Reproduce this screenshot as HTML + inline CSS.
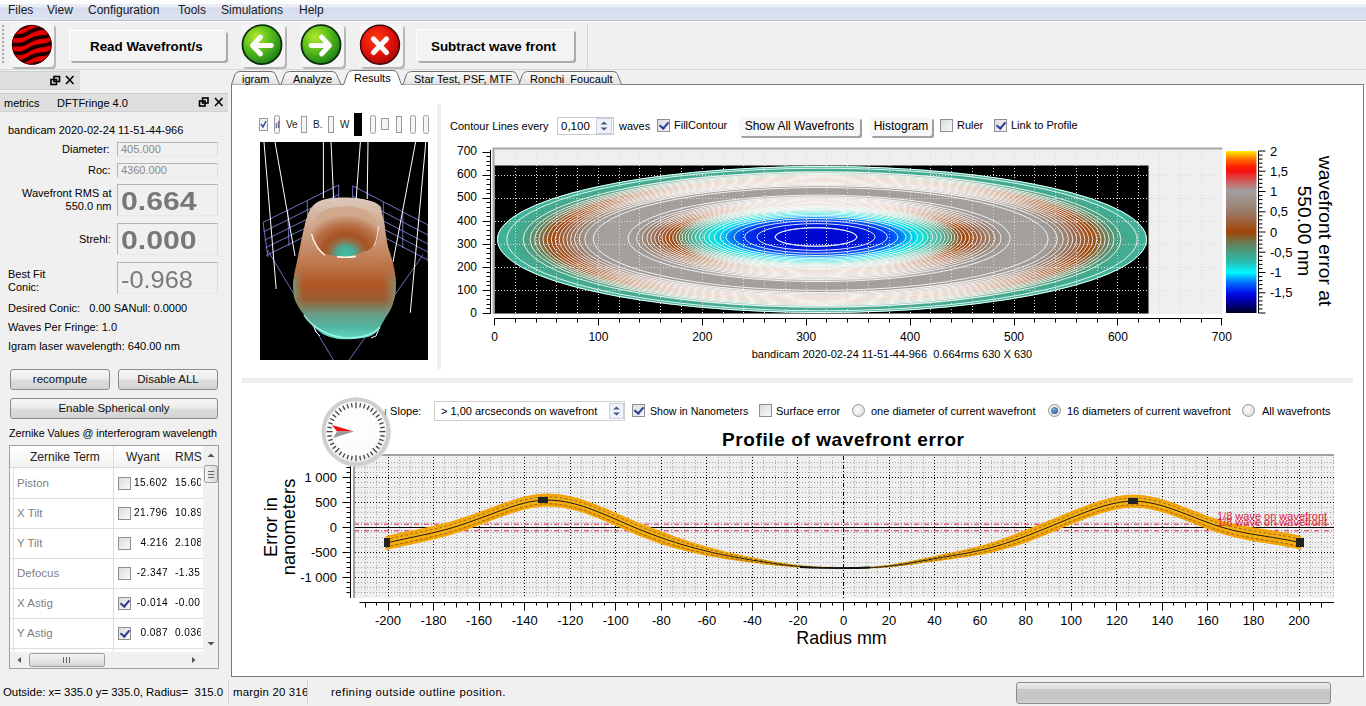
<!DOCTYPE html>
<html><head><meta charset="utf-8">
<style>
*{margin:0;padding:0;box-sizing:border-box}
html,body{width:1366px;height:706px;overflow:hidden;background:#f0f0f0;font-family:"Liberation Sans",sans-serif;font-size:11px;color:#000}
.a{position:absolute}
.t{position:absolute;white-space:nowrap;line-height:1}
.menu{left:0;top:0;width:1366px;height:21px;background:linear-gradient(#fdfdfe 0px,#fafbfd 3.5px,#eaedf6 4.5px,#e8ecf6 7px,#d5dcee 8px,#dae0f0 16px,#dfe4f2 20px);border-bottom:1px solid #b8bccb}
.menu span{position:absolute;top:4px;font-size:12px;color:#1a1a1a;line-height:13px}
.tb{position:absolute;background:#f3f3f3;border-radius:3px;border-top:1px solid #fff;border-left:1px solid #fff;box-shadow:2px 2px 0 0 #ababab}
.ib{position:absolute;background:#f4f4f4;border-radius:4px;box-shadow:2px 2px 0 0 #b8b8b8}
.box{position:absolute;border:1px solid #b4b4b4;border-bottom-color:#e8e8e8;border-right-color:#dcdcdc;background:#f0f0f0}
.btn{position:absolute;border:1px solid #8c8c8c;border-radius:3px;background:linear-gradient(#f6f6f6 0%,#ececec 45%,#dcdcdc 55%,#d4d4d4 100%);text-align:center;font-size:11.5px;line-height:18px;color:#111}
.cb{position:absolute;width:13px;height:13px;border:1px solid #8e8f8f;background:linear-gradient(135deg,#dcdcdc,#f8f8f8)}
.cb.on::after{content:"";position:absolute;left:3px;top:0px;width:4px;height:7px;border:solid #2a3e9a;border-width:0 2px 2px 0;transform:rotate(40deg)}
.fbtn{position:absolute;background:#f3f3f3;border-radius:2px;box-shadow:2px 2px 0 0 #a9a9a9;font-size:12px;line-height:18px;text-align:center}
.rad{position:absolute;width:13px;height:13px;border-radius:50%;border:1px solid #959595;background:radial-gradient(circle at 40% 40%,#fdfdfd,#d6d6d6)}
</style></head><body>
<div class="a menu">
<span style="left:8px">Files</span>
<span style="left:47px">View</span>
<span style="left:88px">Configuration</span>
<span style="left:178px">Tools</span>
<span style="left:221px">Simulations</span>
<span style="left:299px">Help</span>
</div>
<div class="a" style="left:0;top:21px;width:1366px;height:49px;background:#f0f0f0;border-top:1px solid #fff;border-bottom:1px solid #d7d7d7"></div>
<!-- grip -->
<div class="a" style="left:2px;top:25px;width:2px;height:40px;background:repeating-linear-gradient(#a8a8a8 0 2px,transparent 2px 4px)"></div>
<!-- icon button frames -->
<div class="ib" style="left:10px;top:23px;width:44px;height:44px"></div>
<div class="ib" style="left:241px;top:24px;width:44px;height:43px"></div>
<div class="ib" style="left:300px;top:24px;width:44px;height:43px"></div>
<div class="ib" style="left:359px;top:24px;width:44px;height:43px"></div>
<div class="tb" style="left:69px;top:30px;width:157px;height:31px"></div>
<div class="t" style="left:90px;top:40px;font-size:13.4px;font-weight:700">Read Wavefront/s</div>
<div class="tb" style="left:416px;top:29px;width:158px;height:32px"></div>
<div class="t" style="left:431px;top:40px;font-size:13.4px;font-weight:700">Subtract wave front</div>
<div class="a" style="left:587px;top:24px;width:1px;height:44px;background:#d4d4d4"></div>
<svg class="a" style="left:0;top:20px" width="420" height="50" viewBox="0 20 420 50">
<defs>
<radialGradient id="gg" cx="0.35" cy="0.3" r="0.75"><stop offset="0" stop-color="#b0ea28"/><stop offset="0.5" stop-color="#58bc1c"/><stop offset="1" stop-color="#1a7e1a"/></radialGradient>
<radialGradient id="rg" cx="0.4" cy="0.35" r="0.7"><stop offset="0" stop-color="#ff3a10"/><stop offset="0.6" stop-color="#e01008"/><stop offset="1" stop-color="#a00806"/></radialGradient>
<filter id="bl" x="-10%" y="-10%" width="120%" height="120%"><feGaussianBlur stdDeviation="0.7"/></filter><clipPath id="ballclip"><circle cx="31.8" cy="44.8" r="19.8"/></clipPath>
</defs>
<circle cx="31.8" cy="44.8" r="19.8" fill="#e80000"/>
<g clip-path="url(#ballclip)"><g filter="url(#bl)" fill="none" stroke="#1a0000" stroke-width="3.8" stroke-linecap="round"><path d="M8 20.0 C14 17.0 20 21.0 26 17.0 S38 11.0 44 11.0 S52 7.0 58 5.0"/><path d="M8 28.6 C14 25.6 20 29.6 26 25.6 S38 19.6 44 19.6 S52 15.6 58 13.6"/><path d="M8 37.2 C14 34.2 20 38.2 26 34.2 S38 28.2 44 28.2 S52 24.2 58 22.2"/><path d="M8 45.8 C14 42.8 20 46.8 26 42.8 S38 36.8 44 36.8 S52 32.8 58 30.8"/><path d="M8 54.4 C14 51.4 20 55.4 26 51.4 S38 45.4 44 45.4 S52 41.4 58 39.4"/><path d="M8 63.0 C14 60.0 20 64.0 26 60.0 S38 54.0 44 54.0 S52 50.0 58 48.0"/><path d="M8 71.6 C14 68.6 20 72.6 26 68.6 S38 62.6 44 62.6 S52 58.6 58 56.6"/><path d="M8 80.2 C14 77.2 20 81.2 26 77.2 S38 71.2 44 71.2 S52 67.2 58 65.2"/></g></g>
<circle cx="31.8" cy="44.8" r="19.5" fill="none" stroke="#400" stroke-width="1"/>
<circle cx="262" cy="44.7" r="19.5" fill="url(#gg)" stroke="#0a300a" stroke-width="1.8"/>
<path d="M253 45.5 H271.5 M260.5 37 L252.5 45.5 L260.5 54" fill="none" stroke="#fbfbfb" stroke-width="4.8" stroke-linecap="round" stroke-linejoin="round"/>
<circle cx="321" cy="44.7" r="19.5" fill="url(#gg)" stroke="#0a300a" stroke-width="1.8"/>
<path d="M311 45.5 H329 M321.5 37 L329.5 45.5 L321.5 54" fill="none" stroke="#fbfbfb" stroke-width="4.8" stroke-linecap="round" stroke-linejoin="round"/>
<circle cx="380" cy="44.7" r="19.5" fill="url(#rg)" stroke="#3a0404" stroke-width="1.4"/>
<path d="M373.5 39 L386.5 52.5 M386.5 39 L373.5 52.5" fill="none" stroke="#fbfbfb" stroke-width="5.2" stroke-linecap="round"/>
</svg>
<!-- dock titles -->
<div class="a" style="left:0;top:71px;width:80px;height:19px;background:#dedede;border-top:1px solid #cfcfcf;border-bottom:1px solid #d4d4d4"></div>
<div class="a" style="left:0;top:93px;width:228px;height:19px;background:#dedede;border-top:1px solid #cdcdcd;border-bottom:1px solid #d0d0d0"></div>
<svg class="a" style="left:0;top:70px" width="232" height="45" viewBox="0 70 232 45">
<g fill="none" stroke="#000" stroke-width="1.6">
<rect x="51" y="79.5" width="5.5" height="5"/><rect x="54" y="76.5" width="5.5" height="5"/>
<path d="M66 76 L73.5 84 M73.5 76 L66 84"/>
<rect x="199.5" y="101" width="5.5" height="5"/><rect x="202.5" y="98" width="5.5" height="5"/>
<path d="M215 98 L222.5 106 M222.5 98 L215 106"/>
</g>
</svg>
<div class="t" style="left:4px;top:98px;font-size:11px">metrics</div>
<div class="t" style="left:57px;top:98px;font-size:11px">DFTFringe 4.0</div>
<div class="t" style="left:8px;top:125px;font-size:11px">bandicam 2020-02-24 11-51-44-966</div>
<div class="t" style="left:62px;top:144px;font-size:11px">Diameter:</div>
<div class="box" style="left:117px;top:142px;width:101px;height:15px"></div>
<div class="t" style="left:121px;top:144px;font-size:11px;color:#8a8a8a">405.000</div>
<div class="t" style="left:88px;top:165px;font-size:11px">Roc:</div>
<div class="box" style="left:117px;top:163px;width:101px;height:15px"></div>
<div class="t" style="left:121px;top:165px;font-size:11px;color:#8a8a8a">4360.000</div>
<div class="t" style="left:22px;top:187px;font-size:11px;text-align:right;line-height:13px">Wavefront RMS at<br><span style="padding-left:43px">550.0 nm</span></div>
<div class="box" style="left:117px;top:184px;width:101px;height:32px"></div>
<div class="t" style="left:121px;top:188px;font-size:26.5px;font-weight:700;color:#787878;transform:scaleX(1.14);transform-origin:0 0">0.664</div>
<div class="t" style="left:79px;top:234px;font-size:11px">Strehl:</div>
<div class="box" style="left:117px;top:223px;width:101px;height:32px"></div>
<div class="t" style="left:121px;top:227px;font-size:26.5px;font-weight:700;color:#787878;transform:scaleX(1.14);transform-origin:0 0">0.000</div>
<div class="t" style="left:8px;top:268px;font-size:11px;line-height:13px">Best Fit<br>Conic:</div>
<div class="box" style="left:117px;top:262px;width:101px;height:32px"></div>
<div class="t" style="left:121px;top:268px;font-size:24.5px;font-weight:400;color:#7a7a7a;transform:scaleX(1.035);transform-origin:0 0">-0.968</div>
<div class="t" style="left:8px;top:303px;font-size:11px">Desired Conic:&nbsp;&nbsp; 0.00 SANull: 0.0000</div>
<div class="t" style="left:8px;top:322px;font-size:11px">Waves Per Fringe: 1.0</div>
<div class="t" style="left:8px;top:341px;font-size:11px">Igram laser wavelength: 640.00 nm</div>
<div class="btn" style="left:10px;top:369px;width:100px;height:21px">recompute</div>
<div class="btn" style="left:118px;top:369px;width:100px;height:21px">Disable ALL</div>
<div class="btn" style="left:10px;top:398px;width:208px;height:21px">Enable Spherical only</div>
<div class="t" style="left:9px;top:428px;font-size:10.7px">Zernike Values @ interferogram wavelength</div>
<!-- table -->
<div class="a" style="left:9px;top:445px;width:210px;height:224px;border:1px solid #a0a0a0;background:#fff;overflow:hidden">
 <div class="a" style="left:0;top:0;width:193px;height:22px;background:linear-gradient(#ffffff,#f2f2f2);border-bottom:1px solid #d8d8d8"></div>
 <div class="a" style="left:103px;top:0;width:1px;height:206px;background:#dcdcdc"></div>
 <div class="a" style="left:3px;top:22px;width:1px;height:184px;background:#e0e0e0"></div>
 <div class="t" style="left:20px;top:5px;font-size:12px;color:#222">Zernike Term</div>
 <div class="t" style="left:116px;top:5px;font-size:12px;color:#222">Wyant</div>
 <div class="t" style="left:165px;top:5px;font-size:12px;color:#222">RMS</div>
 <!-- rows -->
 <div class="a" style="left:0;top:52px;width:193px;height:1px;background:#dedede"></div>
 <div class="a" style="left:0;top:82px;width:193px;height:1px;background:#dedede"></div>
 <div class="a" style="left:0;top:112px;width:193px;height:1px;background:#dedede"></div>
 <div class="a" style="left:0;top:142px;width:193px;height:1px;background:#dedede"></div>
 <div class="a" style="left:0;top:172px;width:193px;height:1px;background:#dedede"></div>
 <div class="a" style="left:0;top:202px;width:193px;height:1px;background:#dedede"></div>
 <div class="t" style="left:7px;top:32px;font-size:11.5px;color:#808080">Piston</div>
 <div class="t" style="left:7px;top:62px;font-size:11.5px;color:#808080">X Tilt</div>
 <div class="t" style="left:7px;top:92px;font-size:11.5px;color:#808080">Y Tilt</div>
 <div class="t" style="left:7px;top:122px;font-size:11.5px;color:#808080">Defocus</div>
 <div class="t" style="left:7px;top:152px;font-size:11.5px;color:#808080">X Astig</div>
 <div class="t" style="left:7px;top:182px;font-size:11.5px;color:#808080">Y Astig</div>
 <div class="cb" style="left:108px;top:31px"></div>
 <div class="cb" style="left:108px;top:61px"></div>
 <div class="cb" style="left:108px;top:91px"></div>
 <div class="cb" style="left:108px;top:121px"></div>
 <div class="cb on" style="left:108px;top:151px"></div>
 <div class="cb on" style="left:108px;top:181px"></div>
 <div class="t" style="right:50px;top:31px;font-size:11px;letter-spacing:0.5px;transform:scaleX(0.92);transform-origin:100% 0">15.602</div>
 <div class="t" style="left:165px;top:31px;font-size:11px;letter-spacing:0.5px;transform:scaleX(0.92);transform-origin:0 0;width:28px;overflow:hidden">15.60</div>
 <div class="t" style="right:50px;top:61px;font-size:11px;letter-spacing:0.5px;transform:scaleX(0.92);transform-origin:100% 0">21.796</div>
 <div class="t" style="left:165px;top:61px;font-size:11px;letter-spacing:0.5px;transform:scaleX(0.92);transform-origin:0 0;width:28px;overflow:hidden">10.89</div>
 <div class="t" style="right:50px;top:91px;font-size:11px;letter-spacing:0.5px;transform:scaleX(0.92);transform-origin:100% 0">4.216</div>
 <div class="t" style="left:165px;top:91px;font-size:11px;letter-spacing:0.5px;transform:scaleX(0.92);transform-origin:0 0;width:28px;overflow:hidden">2.108</div>
 <div class="t" style="right:50px;top:121px;font-size:11px;letter-spacing:0.5px;transform:scaleX(0.92);transform-origin:100% 0">-2.347</div>
 <div class="t" style="left:165px;top:121px;font-size:11px;letter-spacing:0.5px;transform:scaleX(0.92);transform-origin:0 0;width:28px;overflow:hidden">-1.35</div>
 <div class="t" style="right:50px;top:151px;font-size:11px;letter-spacing:0.5px;transform:scaleX(0.92);transform-origin:100% 0">-0.014</div>
 <div class="t" style="left:165px;top:151px;font-size:11px;letter-spacing:0.5px;transform:scaleX(0.92);transform-origin:0 0;width:28px;overflow:hidden">-0.00</div>
 <div class="t" style="right:50px;top:181px;font-size:11px;letter-spacing:0.5px;transform:scaleX(0.92);transform-origin:100% 0">0.087</div>
 <div class="t" style="left:165px;top:181px;font-size:11px;letter-spacing:0.5px;transform:scaleX(0.92);transform-origin:0 0;width:28px;overflow:hidden">0.036</div>
 <!-- vscroll -->
 <div class="a" style="left:193px;top:0;width:16px;height:206px;background:#f0f0f0"></div>
 <svg class="a" style="left:193px;top:0" width="16" height="206">
  <path d="M4.5 11 L8 7.5 L11.5 11 Z" fill="#555"/>
  <rect x="1.5" y="19.5" width="13" height="17" rx="2" fill="url(#sbg)" stroke="#9a9a9a"/>
  <path d="M5 25.5 H11 M5 28.5 H11 M5 31.5 H11" stroke="#666"/>
  <path d="M4.5 196 L8 199.5 L11.5 196 Z" fill="#555"/>
  <defs><linearGradient id="sbg" x1="0" x2="1"><stop offset="0" stop-color="#f4f4f4"/><stop offset="1" stop-color="#d8d8d8"/></linearGradient></defs>
 </svg>
 <!-- hscroll -->
 <div class="a" style="left:0;top:206px;width:193px;height:16px;background:#f0f0f0"></div>
 <svg class="a" style="left:0;top:206px" width="209" height="16">
  <defs><linearGradient id="hbg" x1="0" y1="0" x2="0" y2="1"><stop offset="0" stop-color="#f6f6f6"/><stop offset="1" stop-color="#d4d4d4"/></linearGradient></defs>
  <path d="M11 5 L7.5 8 L11 11 Z" fill="#555"/>
  <rect x="19.5" y="1.5" width="75" height="13" rx="2" fill="url(#hbg)" stroke="#9a9a9a"/>
  <path d="M53.5 5 V11 M56.5 5 V11 M59.5 5 V11" stroke="#666"/>
  <path d="M182 5 L185.5 8 L182 11 Z" fill="#555"/>
  <rect x="193" y="0" width="16" height="16" fill="#f0f0f0"/>
 </svg>
</div>
<!-- tab pane -->
<div class="a" style="left:231px;top:84px;width:1133px;height:593px;background:#fff;border:1px solid #7a7a7a"></div>
<div class="a" style="left:1364px;top:85px;width:2px;height:591px;background:#fff"></div>
<svg class="a" style="left:228px;top:68px" width="400" height="20" viewBox="228 68 400 20">
<defs><linearGradient id="tabg" x1="0" y1="0" x2="0" y2="1"><stop offset="0" stop-color="#fafafa"/><stop offset="1" stop-color="#e2e2e2"/></linearGradient></defs>
<g stroke="#6f6f6f" stroke-width="1" fill="url(#tabg)">
<path d="M231.5 84.5 L235 74.5 Q236.5 71.5 240 71.5 L271 71.5 Q274.5 71.5 275.5 74.5 L279.5 84.5"/>
<path d="M281 84.5 L284.5 74.5 Q286 71.5 289.5 71.5 L332 71.5 Q335.5 71.5 336.5 74.5 L341 84.5"/>
<path d="M403 84.5 L406.5 74.5 Q408 71.5 411.5 71.5 L512 71.5 Q515.5 71.5 516.5 74.5 L520.5 84.5"/>
<path d="M519 84.5 L522.5 74.5 Q524 71.5 527.5 71.5 L613 71.5 Q616.5 71.5 617.5 74.5 L621.5 84.5"/>
</g>
<path d="M343.5 85 L347.5 73.5 Q349 70.5 352.5 70.5 L393 70.5 Q396.5 70.5 397.5 73.5 L401.5 85" fill="#fff" stroke="#6f6f6f"/>
<rect x="344" y="84" width="57" height="2" fill="#fff"/>
</svg>
<div class="t" style="left:242px;top:74px;font-size:11px">igram</div>
<div class="t" style="left:293px;top:74px;font-size:11px">Analyze</div>
<div class="t" style="left:354px;top:73px;font-size:11px">Results</div>
<div class="t" style="left:414px;top:74px;font-size:11px">Star Test, PSF, MTF</div>
<div class="t" style="left:530px;top:74px;font-size:11px">Ronchi&nbsp; Foucault</div>
<!-- splitters -->
<div class="a" style="left:437px;top:104px;width:4px;height:265px;background:#eeeeee"></div>
<div class="a" style="left:242px;top:378px;width:1111px;height:5px;background:#eeeeee"></div>
<!-- 3D toolbar -->
<svg class="a" style="left:255px;top:110px" width="180" height="30" viewBox="255 110 180 30">
<g stroke="#9a9a9a" fill="#f4f4f4">
<rect x="259.5" y="118.5" width="8" height="12"/>
<rect x="274.5" y="115.5" width="5" height="18" rx="2"/>
<rect x="301.5" y="116.5" width="5" height="16"/>
<rect x="328.5" y="116.5" width="5" height="16"/>
<rect x="370.5" y="115.5" width="5" height="18" rx="2"/>
<rect x="381.5" y="118.5" width="7" height="11"/>
<rect x="396.5" y="116.5" width="5" height="16"/>
<rect x="410.5" y="115.5" width="5" height="18" rx="2"/>
<rect x="423.5" y="115.5" width="5" height="18" rx="2"/>
</g>
<path d="M261 124 L263 127 L266 121" stroke="#2c4a9a" stroke-width="1.4" fill="none"/>
<rect x="354" y="113" width="8" height="23" fill="#000"/>
<g font-family="Liberation Sans" font-size="10" fill="#222">
<text x="286" y="128">Ve</text><text x="313" y="128">B.</text><text x="340" y="128">W</text>
<text x="275" y="128" font-size="9">ıl</text>
</g>
</svg>
<!-- 3D view -->
<svg class="a" style="left:260px;top:142px" width="168" height="218" viewBox="260 142 168 218">
<defs>
<linearGradient id="body" x1="0" y1="198" x2="0" y2="339" gradientUnits="userSpaceOnUse"><stop offset="0" stop-color="#dcc8bc"/><stop offset="0.2" stop-color="#cfa890"/><stop offset="0.45" stop-color="#c07a50"/><stop offset="0.62" stop-color="#ae5624"/><stop offset="0.72" stop-color="#985c30"/><stop offset="0.82" stop-color="#6a9a84"/><stop offset="0.92" stop-color="#52b8a2"/><stop offset="1" stop-color="#64d8c8"/></linearGradient>
<linearGradient id="side" x1="292" y1="0" x2="397" y2="0" gradientUnits="userSpaceOnUse">
<stop offset="0" stop-color="#48c8a8" stop-opacity="0.75"/><stop offset="0.12" stop-color="#b07050" stop-opacity="0"/><stop offset="0.85" stop-color="#b07050" stop-opacity="0"/><stop offset="1" stop-color="#58c8b0" stop-opacity="0.6"/>
</linearGradient>
<linearGradient id="sidemask" x1="0" y1="198" x2="0" y2="340" gradientUnits="userSpaceOnUse">
<stop offset="0" stop-color="#fff" stop-opacity="0"/><stop offset="0.45" stop-color="#fff" stop-opacity="0"/><stop offset="0.6" stop-color="#fff" stop-opacity="1"/><stop offset="1" stop-color="#fff" stop-opacity="1"/>
</linearGradient>
<mask id="sm"><rect x="260" y="142" width="168" height="218" fill="url(#sidemask)"/></mask>
<radialGradient id="hole" cx="346" cy="254" r="46" gradientUnits="userSpaceOnUse" gradientTransform="translate(346 254) scale(1 0.85) translate(-346 -254)"><stop offset="0" stop-color="#40c0a8"/><stop offset="0.2" stop-color="#4aa890"/><stop offset="0.36" stop-color="#9a6a40"/><stop offset="0.5" stop-color="#a85224"/><stop offset="0.75" stop-color="#b87048"/><stop offset="1" stop-color="#d0a88c"/></radialGradient>
</defs>
<rect x="260" y="142" width="168" height="218" fill="#000"/>
<g stroke="#9494ff" stroke-width="0.75" fill="none">
<path d="M263 222.4 L338.7 185 M263.8 231.7 L338.7 194.4 M264.6 240.2 L338.7 203.6 M265.4 247.8 L338.7 211.6 M266.2 255.5 L338.7 219.7"/>
<path d="M263 222.4 L268 257 M287.7 210.2 L289 246 M307.2 200.6 L308 237 M338.7 185 V220"/>
<path d="M352.7 185.8 L428 225 M352.7 196 L428 235 M352.7 205 L428 244 M352.7 213 L428 252 M352.7 221 L428 260"/>
<path d="M352.7 185.8 V221 M383.3 201.8 V238 M402.8 212 V248 M428 225 V262"/>
<path d="M267.5 250 L333.4 360 M423 254.8 L349.2 360"/>
</g>
<g stroke="#ffffff" stroke-width="1" fill="none">
<path d="M264 142 L276.2 289"/><path d="M275 142 L295 256"/>
<path d="M323.4 142 V198"/><path d="M331 142 L333.6 198"/>
<path d="M360.4 142 L356.1 199.4"/><path d="M368 142 L367.2 199"/>
<path d="M415.6 142 L393 262"/><path d="M425.8 142 L410.3 312.7"/>
<path d="M310 316 L316 332 L320 336"/><path d="M380 326 L376 336 L371 338"/>
</g>
<path id="bd" d="M312 207 C316 200 330 198.5 344 198.5 C362 198.5 376 200 381 207 C383 218 384 238 388 247 C392 258 396 272 396 284 C396 298 392 310 385 318 C380 326 376 334 368 337 C358 339.5 346 339.5 338 339 C326 337 318 332 314 324 C308 316 298 306 295 296 C293 288 293 276 296 266 C299 252 302 236 305 224 C307 216 309 210 312 207 Z" fill="url(#body)"/>
<path d="M312.7 207.7 C316 201 324 197.5 344 197.5 C364 197.5 378 202 380.7 210 C383 216 385 224 385.3 230.4 C387 242 389 252 389.8 259.8 C392 268 395 274 395.5 280.3 C396 288 395.5 294 394.3 298.4 C392 306 390 310 387.5 314.3 C384 320 381 326 378.5 330 C374 335 369 337 364.8 337 C358 338.5 352 338.5 346.7 338 C338 337.5 330 336.5 324 334.7 C318 331 315 328 312.7 325.6 C308 320 305 317 303.6 314.3 C299 308 296 303 294.5 298.4 C293 292 293 285 293.4 280.3 C295 272 297 266 299 259.8 C301 250 303 240 304.7 230.4 C306 222 309 213 312.7 207.7 Z" fill="url(#body)"/>
<path d="M312.7 207.7 C316 201 324 197.5 344 197.5 C364 197.5 378 202 380.7 210 C383 216 385 224 385.3 230.4 C387 242 389 252 389.8 259.8 C392 268 395 274 395.5 280.3 C396 288 395.5 294 394.3 298.4 C392 306 390 310 387.5 314.3 C384 320 381 326 378.5 330 C374 335 369 337 364.8 337 C358 338.5 352 338.5 346.7 338 C338 337.5 330 336.5 324 334.7 C318 331 315 328 312.7 325.6 C308 320 305 317 303.6 314.3 C299 308 296 303 294.5 298.4 C293 292 293 285 293.4 280.3 C295 272 297 266 299 259.8 C301 250 303 240 304.7 230.4 C306 222 309 213 312.7 207.7 Z" fill="url(#side)" mask="url(#sm)"/>
<path d="M311.5 233 C311 218 322 206.5 344 206.5 C364 206.5 380 214 379.6 232.6 C379 244 368 252 364.8 251 C358 255 351 256.4 344.4 256.4 C335 256.4 326 255 324 253 C317 248 312 241 311.5 233 Z" fill="url(#hole)"/>
<path d="M311.5 234 C314 243 318 250 325 255.3" stroke="#fff" stroke-width="1.4" fill="none" opacity="0.9"/>
<path d="M337 256.6 C344 257.5 350 257.5 356 256.4" stroke="#fff" stroke-width="1.6" fill="none" opacity="0.9"/>
<path d="M378.5 226 C378 234 377 240 374 246" stroke="#fff" stroke-width="1.1" fill="none" opacity="0.75"/>
<path d="M304 315 C312 328 330 337 347 338 C362 338 374 334 380 327" stroke="#a8fff0" stroke-width="1.5" fill="none" opacity="0.8"/>
</svg>
<!-- contour toolbar -->
<div class="t" style="left:450px;top:121px;font-size:11px">Contour Lines every</div>
<div class="a" style="left:557px;top:117px;width:57px;height:18px;border:1px solid #c8c8c8;background:#fff"></div>
<div class="t" style="left:561px;top:121px;font-size:11.5px">0,100</div>
<svg class="a" style="left:596px;top:118px" width="17" height="16"><rect x="0.5" y="0.5" width="15" height="15" fill="#eef2fa" stroke="#c8d0e0"/><path d="M4.5 6.5 L8 3.5 L11.5 6.5 Z M4.5 9.5 L8 12.5 L11.5 9.5 Z" fill="#4a5a80"/></svg>
<div class="t" style="left:619px;top:121px;font-size:11px">waves</div>
<div class="cb on" style="left:657px;top:119px"></div>
<div class="t" style="left:674px;top:120px;font-size:11px">FillContour</div>
<div class="fbtn" style="left:739px;top:117px;width:121px;height:19px;line-height:19px;background:#f7f7f7;box-shadow:2px 2px 0 0 #a0a0a0">Show All Wavefronts</div>
<div class="fbtn" style="left:870px;top:117px;width:62px;height:19px;line-height:19px;background:#f7f7f7;box-shadow:2px 2px 0 0 #a0a0a0">Histogram</div>
<div class="cb" style="left:940px;top:119px"></div>
<div class="t" style="left:957px;top:120px;font-size:11px">Ruler</div>
<div class="cb on" style="left:994px;top:119px"></div>
<div class="t" style="left:1011px;top:120px;font-size:11px">Link to Profile</div>
<svg class="a" style="left:440px;top:104px" width="920" height="270" viewBox="440 104 920 270">
<defs><radialGradient id="wf" cx="0.5" cy="0.5" r="0.5"><stop offset="0.000" stop-color="#000089"/><stop offset="0.025" stop-color="#00008b"/><stop offset="0.050" stop-color="#00008f"/><stop offset="0.075" stop-color="#000095"/><stop offset="0.100" stop-color="#00009d"/><stop offset="0.125" stop-color="#0000a6"/><stop offset="0.150" stop-color="#0000b5"/><stop offset="0.175" stop-color="#0000ca"/><stop offset="0.200" stop-color="#0000e3"/><stop offset="0.225" stop-color="#0018eb"/><stop offset="0.250" stop-color="#0034f2"/><stop offset="0.275" stop-color="#0058fa"/><stop offset="0.300" stop-color="#0099ff"/><stop offset="0.325" stop-color="#00e9ff"/><stop offset="0.350" stop-color="#16dad6"/><stop offset="0.375" stop-color="#31b5a5"/><stop offset="0.400" stop-color="#4d9979"/><stop offset="0.425" stop-color="#7a6b3f"/><stop offset="0.450" stop-color="#9f4911"/><stop offset="0.475" stop-color="#9d603a"/><stop offset="0.500" stop-color="#9a7763"/><stop offset="0.525" stop-color="#9c877c"/><stop offset="0.550" stop-color="#9e948e"/><stop offset="0.575" stop-color="#a09d9c"/><stop offset="0.600" stop-color="#a39b9b"/><stop offset="0.625" stop-color="#a89595"/><stop offset="0.650" stop-color="#a99393"/><stop offset="0.675" stop-color="#a69797"/><stop offset="0.700" stop-color="#a0a0a0"/><stop offset="0.725" stop-color="#9f9996"/><stop offset="0.750" stop-color="#9d8f86"/><stop offset="0.775" stop-color="#9b8071"/><stop offset="0.800" stop-color="#9b6d50"/><stop offset="0.825" stop-color="#9e5628"/><stop offset="0.850" stop-color="#9a4a11"/><stop offset="0.875" stop-color="#72744a"/><stop offset="0.900" stop-color="#559170"/><stop offset="0.925" stop-color="#44a285"/><stop offset="0.950" stop-color="#3ea88f"/><stop offset="0.975" stop-color="#39ad98"/><stop offset="1.000" stop-color="#34b2a0"/></radialGradient>
<linearGradient id="cbar" x1="0" y1="0" x2="0" y2="1"><stop offset="0.000" stop-color="#fff000"/><stop offset="0.031" stop-color="#ff9f00"/><stop offset="0.062" stop-color="#ff5800"/><stop offset="0.094" stop-color="#ff2100"/><stop offset="0.125" stop-color="#f71010"/><stop offset="0.156" stop-color="#e23838"/><stop offset="0.188" stop-color="#cd5d5d"/><stop offset="0.219" stop-color="#b67f7f"/><stop offset="0.250" stop-color="#a0a0a0"/><stop offset="0.281" stop-color="#9e9692"/><stop offset="0.312" stop-color="#9d8d84"/><stop offset="0.344" stop-color="#9c8476"/><stop offset="0.375" stop-color="#9a7a68"/><stop offset="0.406" stop-color="#9c6c50"/><stop offset="0.438" stop-color="#9d5f38"/><stop offset="0.469" stop-color="#9e5220"/><stop offset="0.500" stop-color="#a04408"/><stop offset="0.531" stop-color="#875e2c"/><stop offset="0.562" stop-color="#6e7850"/><stop offset="0.594" stop-color="#5a8c69"/><stop offset="0.625" stop-color="#46a082"/><stop offset="0.656" stop-color="#37af9b"/><stop offset="0.688" stop-color="#28beb4"/><stop offset="0.719" stop-color="#14dcda"/><stop offset="0.750" stop-color="#00faff"/><stop offset="0.781" stop-color="#00b4ff"/><stop offset="0.812" stop-color="#006eff"/><stop offset="0.844" stop-color="#0040f5"/><stop offset="0.875" stop-color="#0012ea"/><stop offset="0.906" stop-color="#0000c6"/><stop offset="0.938" stop-color="#000092"/><stop offset="0.969" stop-color="#00005d"/><stop offset="1.000" stop-color="#000028"/></linearGradient></defs>
<rect x="493" y="148" width="729.5" height="166" fill="#efefef"/>
<rect x="494.5" y="165.5" width="654" height="148" fill="#000"/>
<g><ellipse cx="822.00" cy="239.50" rx="325.00" ry="73.50" fill="#40b49b"/><ellipse cx="822.00" cy="239.50" rx="323.38" ry="73.13" fill="#40b39a"/><ellipse cx="822.00" cy="239.50" rx="321.75" ry="72.77" fill="#40b299"/><ellipse cx="822.00" cy="239.50" rx="320.12" ry="72.40" fill="#41b298"/><ellipse cx="822.00" cy="239.50" rx="318.50" ry="72.03" fill="#41b197"/><ellipse cx="822.00" cy="239.50" rx="316.88" ry="71.66" fill="#42b096"/><ellipse cx="822.00" cy="239.50" rx="315.25" ry="71.30" fill="#42af94"/><ellipse cx="822.00" cy="239.50" rx="313.62" ry="70.93" fill="#43ae93"/><ellipse cx="822.00" cy="239.50" rx="312.00" ry="70.56" fill="#43ad92"/><ellipse cx="822.00" cy="239.50" rx="310.38" ry="70.19" fill="#44ac91"/><ellipse cx="822.00" cy="239.50" rx="308.75" ry="69.83" fill="#44ac90"/><ellipse cx="822.00" cy="239.50" rx="307.12" ry="69.46" fill="#45ab8f"/><ellipse cx="822.00" cy="239.50" rx="305.50" ry="69.09" fill="#45aa8d"/><ellipse cx="822.00" cy="239.50" rx="303.88" ry="68.72" fill="#46a98c"/><ellipse cx="822.00" cy="239.50" rx="302.25" ry="68.35" fill="#46a88b"/><ellipse cx="822.00" cy="239.50" rx="300.62" ry="67.99" fill="#47a689"/><ellipse cx="822.00" cy="239.50" rx="299.00" ry="67.62" fill="#48a587"/><ellipse cx="822.00" cy="239.50" rx="297.38" ry="67.25" fill="#4ba284"/><ellipse cx="822.00" cy="239.50" rx="295.75" ry="66.88" fill="#4e9f80"/><ellipse cx="822.00" cy="239.50" rx="294.12" ry="66.52" fill="#529b7b"/><ellipse cx="822.00" cy="239.50" rx="292.50" ry="66.15" fill="#569775"/><ellipse cx="822.00" cy="239.50" rx="290.87" ry="65.78" fill="#5b926f"/><ellipse cx="822.00" cy="239.50" rx="289.25" ry="65.41" fill="#608c69"/><ellipse cx="822.00" cy="239.50" rx="287.62" ry="65.05" fill="#668762"/><ellipse cx="822.00" cy="239.50" rx="286.00" ry="64.68" fill="#6c815b"/><ellipse cx="822.00" cy="239.50" rx="284.37" ry="64.31" fill="#717b54"/><ellipse cx="822.00" cy="239.50" rx="282.75" ry="63.94" fill="#78744c"/><ellipse cx="822.00" cy="239.50" rx="281.12" ry="63.58" fill="#7e6e43"/><ellipse cx="822.00" cy="239.50" rx="279.50" ry="63.21" fill="#84683b"/><ellipse cx="822.00" cy="239.50" rx="277.87" ry="62.84" fill="#8a6233"/><ellipse cx="822.00" cy="239.50" rx="276.25" ry="62.47" fill="#915c2a"/><ellipse cx="822.00" cy="239.50" rx="274.62" ry="62.11" fill="#975622"/><ellipse cx="822.00" cy="239.50" rx="273.00" ry="61.74" fill="#9d501a"/><ellipse cx="822.00" cy="239.50" rx="271.37" ry="61.37" fill="#a34a12"/><ellipse cx="822.00" cy="239.50" rx="269.75" ry="61.00" fill="#a44a13"/><ellipse cx="822.00" cy="239.50" rx="268.12" ry="60.64" fill="#a34d19"/><ellipse cx="822.00" cy="239.50" rx="266.50" ry="60.27" fill="#a25120"/><ellipse cx="822.00" cy="239.50" rx="264.87" ry="59.90" fill="#a15426"/><ellipse cx="822.00" cy="239.50" rx="263.25" ry="59.53" fill="#a0572c"/><ellipse cx="822.00" cy="239.50" rx="261.62" ry="59.17" fill="#9f5b33"/><ellipse cx="822.00" cy="239.50" rx="260.00" ry="58.80" fill="#9e5e39"/><ellipse cx="821.93" cy="239.47" rx="258.37" ry="58.43" fill="#9d613f"/><ellipse cx="821.87" cy="239.44" rx="256.75" ry="58.06" fill="#9c6545"/><ellipse cx="821.80" cy="239.42" rx="255.12" ry="57.70" fill="#9c694c"/><ellipse cx="821.73" cy="239.39" rx="253.50" ry="57.33" fill="#9c6e53"/><ellipse cx="821.67" cy="239.36" rx="251.87" ry="56.96" fill="#9c725a"/><ellipse cx="821.60" cy="239.33" rx="250.25" ry="56.59" fill="#9c7761"/><ellipse cx="821.53" cy="239.31" rx="248.62" ry="56.23" fill="#9c7b67"/><ellipse cx="821.47" cy="239.28" rx="247.00" ry="55.86" fill="#9c7f6e"/><ellipse cx="821.40" cy="239.25" rx="245.37" ry="55.49" fill="#9c8374"/><ellipse cx="821.33" cy="239.22" rx="243.75" ry="55.12" fill="#9c8779"/><ellipse cx="821.27" cy="239.19" rx="242.12" ry="54.76" fill="#9c8a7e"/><ellipse cx="821.20" cy="239.17" rx="240.50" ry="54.39" fill="#9d8d83"/><ellipse cx="821.13" cy="239.14" rx="238.87" ry="54.02" fill="#9e9087"/><ellipse cx="821.07" cy="239.11" rx="237.25" ry="53.65" fill="#9f938b"/><ellipse cx="821.00" cy="239.08" rx="235.62" ry="53.29" fill="#9f9690"/><ellipse cx="820.93" cy="239.06" rx="234.00" ry="52.92" fill="#a09994"/><ellipse cx="820.87" cy="239.03" rx="232.37" ry="52.55" fill="#a19b97"/><ellipse cx="820.80" cy="239.00" rx="230.75" ry="52.18" fill="#a19d9a"/><ellipse cx="820.73" cy="238.97" rx="229.12" ry="51.82" fill="#a29f9c"/><ellipse cx="820.67" cy="238.94" rx="227.50" ry="51.45" fill="#a2a09e"/><ellipse cx="820.60" cy="238.92" rx="225.87" ry="51.08" fill="#a2a09e"/><ellipse cx="820.53" cy="238.89" rx="224.25" ry="50.71" fill="#a3a09e"/><ellipse cx="820.47" cy="238.86" rx="222.62" ry="50.35" fill="#a3a09e"/><ellipse cx="820.40" cy="238.83" rx="221.00" ry="49.98" fill="#a3a09e"/><ellipse cx="820.33" cy="238.81" rx="219.37" ry="49.61" fill="#a3a09e"/><ellipse cx="820.27" cy="238.78" rx="217.75" ry="49.24" fill="#a4a09e"/><ellipse cx="820.20" cy="238.75" rx="216.12" ry="48.88" fill="#a4a09e"/><ellipse cx="820.13" cy="238.72" rx="214.50" ry="48.51" fill="#a4a09e"/><ellipse cx="820.07" cy="238.69" rx="212.87" ry="48.14" fill="#a4a09e"/><ellipse cx="820.00" cy="238.67" rx="211.25" ry="47.77" fill="#a4a09e"/><ellipse cx="819.93" cy="238.64" rx="209.62" ry="47.41" fill="#a4a09e"/><ellipse cx="819.87" cy="238.61" rx="208.00" ry="47.04" fill="#a4a09e"/><ellipse cx="819.80" cy="238.58" rx="206.37" ry="46.67" fill="#a4a09e"/><ellipse cx="819.73" cy="238.56" rx="204.75" ry="46.30" fill="#a4a09e"/><ellipse cx="819.67" cy="238.53" rx="203.12" ry="45.94" fill="#a4a09e"/><ellipse cx="819.60" cy="238.50" rx="201.50" ry="45.57" fill="#a4a09e"/><ellipse cx="819.53" cy="238.47" rx="199.87" ry="45.20" fill="#a3a09e"/><ellipse cx="819.47" cy="238.44" rx="198.25" ry="44.83" fill="#a3a09e"/><ellipse cx="819.40" cy="238.42" rx="196.62" ry="44.47" fill="#a3a09e"/><ellipse cx="819.33" cy="238.39" rx="195.00" ry="44.10" fill="#a3a09e"/><ellipse cx="819.27" cy="238.36" rx="193.37" ry="43.73" fill="#a2a09e"/><ellipse cx="819.20" cy="238.33" rx="191.75" ry="43.36" fill="#a2a09e"/><ellipse cx="819.13" cy="238.31" rx="190.12" ry="43.00" fill="#a29f9d"/><ellipse cx="819.07" cy="238.28" rx="188.50" ry="42.63" fill="#a19e9b"/><ellipse cx="819.00" cy="238.25" rx="186.87" ry="42.26" fill="#a19c98"/><ellipse cx="818.93" cy="238.22" rx="185.25" ry="41.89" fill="#a09a95"/><ellipse cx="818.87" cy="238.19" rx="183.62" ry="41.53" fill="#a09791"/><ellipse cx="818.80" cy="238.17" rx="182.00" ry="41.16" fill="#9f948d"/><ellipse cx="818.73" cy="238.14" rx="180.37" ry="40.79" fill="#9e9189"/><ellipse cx="818.67" cy="238.11" rx="178.75" ry="40.42" fill="#9d8e84"/><ellipse cx="818.60" cy="238.08" rx="177.12" ry="40.06" fill="#9c8b80"/><ellipse cx="818.53" cy="238.06" rx="175.50" ry="39.69" fill="#9c887b"/><ellipse cx="818.47" cy="238.03" rx="173.87" ry="39.32" fill="#9c8576"/><ellipse cx="818.40" cy="238.00" rx="172.25" ry="38.95" fill="#9c8170"/><ellipse cx="818.33" cy="237.97" rx="170.62" ry="38.59" fill="#9c7d6a"/><ellipse cx="818.27" cy="237.94" rx="169.00" ry="38.22" fill="#9c7863"/><ellipse cx="818.20" cy="237.92" rx="167.37" ry="37.85" fill="#9c745c"/><ellipse cx="818.13" cy="237.89" rx="165.75" ry="37.48" fill="#9c7056"/><ellipse cx="818.07" cy="237.86" rx="164.12" ry="37.12" fill="#9c6b4f"/><ellipse cx="818.00" cy="237.83" rx="162.50" ry="36.75" fill="#9c6748"/><ellipse cx="817.93" cy="237.81" rx="160.87" ry="36.38" fill="#9c6342"/><ellipse cx="817.87" cy="237.78" rx="159.25" ry="36.01" fill="#9d5f3b"/><ellipse cx="817.80" cy="237.75" rx="157.62" ry="35.65" fill="#9f5c35"/><ellipse cx="817.73" cy="237.72" rx="156.00" ry="35.28" fill="#a0582e"/><ellipse cx="817.67" cy="237.69" rx="154.37" ry="34.91" fill="#a15527"/><ellipse cx="817.60" cy="237.67" rx="152.75" ry="34.54" fill="#a25121"/><ellipse cx="817.53" cy="237.64" rx="151.12" ry="34.18" fill="#a34e1a"/><ellipse cx="817.47" cy="237.61" rx="149.50" ry="33.81" fill="#a44a14"/><ellipse cx="817.40" cy="237.58" rx="147.87" ry="33.44" fill="#a34a12"/><ellipse cx="817.33" cy="237.56" rx="146.25" ry="33.07" fill="#9c511b"/><ellipse cx="817.27" cy="237.53" rx="144.62" ry="32.71" fill="#955724"/><ellipse cx="817.20" cy="237.50" rx="143.00" ry="32.34" fill="#8e5e2d"/><ellipse cx="817.13" cy="237.47" rx="141.37" ry="31.97" fill="#876537"/><ellipse cx="817.07" cy="237.44" rx="139.75" ry="31.60" fill="#806d41"/><ellipse cx="817.00" cy="237.42" rx="138.12" ry="31.24" fill="#78744c"/><ellipse cx="816.93" cy="237.39" rx="136.50" ry="30.87" fill="#6f7d56"/><ellipse cx="816.87" cy="237.36" rx="134.87" ry="30.50" fill="#678560"/><ellipse cx="816.80" cy="237.33" rx="133.25" ry="30.13" fill="#5f8e6b"/><ellipse cx="816.73" cy="237.31" rx="131.62" ry="29.77" fill="#579675"/><ellipse cx="816.67" cy="237.28" rx="130.00" ry="29.40" fill="#4f9e7f"/><ellipse cx="816.60" cy="237.25" rx="128.37" ry="29.03" fill="#48a588"/><ellipse cx="816.53" cy="237.22" rx="126.75" ry="28.66" fill="#45aa8e"/><ellipse cx="816.47" cy="237.19" rx="125.12" ry="28.30" fill="#43ae93"/><ellipse cx="816.40" cy="237.17" rx="123.50" ry="27.93" fill="#40b299"/><ellipse cx="816.33" cy="237.14" rx="121.87" ry="27.56" fill="#3eb79e"/><ellipse cx="816.27" cy="237.11" rx="120.25" ry="27.19" fill="#3cbba4"/><ellipse cx="816.20" cy="237.08" rx="118.62" ry="26.83" fill="#3abea9"/><ellipse cx="816.13" cy="237.06" rx="117.00" ry="26.46" fill="#37c2ae"/><ellipse cx="816.07" cy="237.03" rx="115.37" ry="26.09" fill="#33c8b5"/><ellipse cx="816.00" cy="237.00" rx="113.75" ry="25.72" fill="#2dcebc"/><ellipse cx="816.00" cy="237.00" rx="112.12" ry="25.36" fill="#28d3c3"/><ellipse cx="816.00" cy="237.00" rx="110.50" ry="24.99" fill="#23d9ca"/><ellipse cx="816.00" cy="237.00" rx="108.87" ry="24.62" fill="#1edfd0"/><ellipse cx="816.00" cy="237.00" rx="107.25" ry="24.25" fill="#19e4d7"/><ellipse cx="816.00" cy="237.00" rx="105.62" ry="23.89" fill="#15e0db"/><ellipse cx="816.00" cy="237.00" rx="104.00" ry="23.52" fill="#11dddf"/><ellipse cx="816.00" cy="237.00" rx="102.37" ry="23.15" fill="#0edae2"/><ellipse cx="816.00" cy="237.00" rx="100.75" ry="22.78" fill="#0ad7e6"/><ellipse cx="816.00" cy="237.00" rx="99.12" ry="22.42" fill="#07d3e9"/><ellipse cx="816.00" cy="237.00" rx="97.50" ry="22.05" fill="#03d0ed"/><ellipse cx="816.00" cy="237.00" rx="95.87" ry="21.68" fill="#00cdf0"/><ellipse cx="816.00" cy="237.00" rx="94.25" ry="21.31" fill="#00bff1"/><ellipse cx="816.00" cy="237.00" rx="92.62" ry="20.95" fill="#00b0f2"/><ellipse cx="816.00" cy="237.00" rx="91.00" ry="20.58" fill="#00a2f3"/><ellipse cx="816.00" cy="237.00" rx="89.37" ry="20.21" fill="#0096f4"/><ellipse cx="816.00" cy="237.00" rx="87.75" ry="19.84" fill="#008bf4"/><ellipse cx="816.00" cy="237.00" rx="86.12" ry="19.48" fill="#0081f5"/><ellipse cx="816.00" cy="237.00" rx="84.50" ry="19.11" fill="#0077f4"/><ellipse cx="816.00" cy="237.00" rx="82.87" ry="18.74" fill="#006df3"/><ellipse cx="816.00" cy="237.00" rx="81.25" ry="18.37" fill="#0064f2"/><ellipse cx="816.00" cy="237.00" rx="79.62" ry="18.01" fill="#005bf2"/><ellipse cx="816.00" cy="237.00" rx="78.00" ry="17.64" fill="#0052f1"/><ellipse cx="816.00" cy="237.00" rx="76.37" ry="17.27" fill="#004af0"/><ellipse cx="816.00" cy="237.00" rx="74.75" ry="16.90" fill="#0042ef"/><ellipse cx="816.00" cy="237.00" rx="73.12" ry="16.54" fill="#003aef"/><ellipse cx="816.00" cy="237.00" rx="71.50" ry="16.17" fill="#0032ee"/><ellipse cx="816.00" cy="237.00" rx="69.87" ry="15.80" fill="#0030ec"/><ellipse cx="816.00" cy="237.00" rx="68.25" ry="15.43" fill="#002deb"/><ellipse cx="816.00" cy="237.00" rx="66.62" ry="15.07" fill="#002be9"/><ellipse cx="816.00" cy="237.00" rx="65.00" ry="14.70" fill="#0029e8"/><ellipse cx="816.00" cy="237.00" rx="63.37" ry="14.33" fill="#0026e6"/><ellipse cx="816.00" cy="237.00" rx="61.75" ry="13.96" fill="#0024e5"/><ellipse cx="816.00" cy="237.00" rx="60.12" ry="13.60" fill="#0022e4"/><ellipse cx="816.00" cy="237.00" rx="58.50" ry="13.23" fill="#0021e3"/><ellipse cx="816.00" cy="237.00" rx="56.87" ry="12.86" fill="#001fe1"/><ellipse cx="816.00" cy="237.00" rx="55.25" ry="12.49" fill="#001de0"/><ellipse cx="816.00" cy="237.00" rx="53.62" ry="12.13" fill="#001bdf"/><ellipse cx="816.00" cy="237.00" rx="52.00" ry="11.76" fill="#001ade"/><ellipse cx="816.00" cy="237.00" rx="50.37" ry="11.39" fill="#0018dd"/><ellipse cx="816.00" cy="237.00" rx="48.75" ry="11.02" fill="#0016dc"/><ellipse cx="816.00" cy="237.00" rx="47.12" ry="10.66" fill="#0015db"/><ellipse cx="816.00" cy="237.00" rx="45.50" ry="10.29" fill="#0014da"/><ellipse cx="816.00" cy="237.00" rx="43.87" ry="9.92" fill="#0012d9"/><ellipse cx="816.00" cy="237.00" rx="42.25" ry="9.55" fill="#0011d8"/><ellipse cx="816.00" cy="237.00" rx="40.62" ry="9.19" fill="#0011d8"/><ellipse cx="816.00" cy="237.00" rx="39.00" ry="8.82" fill="#0010d7"/><ellipse cx="816.00" cy="237.00" rx="37.37" ry="8.45" fill="#000fd7"/><ellipse cx="816.00" cy="237.00" rx="35.75" ry="8.08" fill="#000ed6"/><ellipse cx="816.00" cy="237.00" rx="34.12" ry="7.72" fill="#000ed6"/><ellipse cx="816.00" cy="237.00" rx="32.50" ry="7.35" fill="#000dd6"/><ellipse cx="816.00" cy="237.00" rx="30.87" ry="6.98" fill="#000cd5"/><ellipse cx="816.00" cy="237.00" rx="29.25" ry="6.61" fill="#000cd5"/><ellipse cx="816.00" cy="237.00" rx="27.62" ry="6.25" fill="#000bd4"/><ellipse cx="816.00" cy="237.00" rx="26.00" ry="5.88" fill="#000ad4"/><ellipse cx="816.00" cy="237.00" rx="24.37" ry="5.51" fill="#000ad3"/><ellipse cx="816.00" cy="237.00" rx="22.75" ry="5.14" fill="#0009d3"/><ellipse cx="816.00" cy="237.00" rx="21.12" ry="4.78" fill="#0009d3"/><ellipse cx="816.00" cy="237.00" rx="19.50" ry="4.41" fill="#0008d2"/><ellipse cx="816.00" cy="237.00" rx="17.87" ry="4.04" fill="#0008d2"/><ellipse cx="816.00" cy="237.00" rx="16.25" ry="3.67" fill="#0007d2"/><ellipse cx="816.00" cy="237.00" rx="14.62" ry="3.31" fill="#0007d2"/><ellipse cx="816.00" cy="237.00" rx="13.00" ry="2.94" fill="#0006d1"/><ellipse cx="816.00" cy="237.00" rx="11.37" ry="2.57" fill="#0006d1"/><ellipse cx="816.00" cy="237.00" rx="9.75" ry="2.20" fill="#0006d1"/><ellipse cx="816.00" cy="237.00" rx="8.12" ry="1.84" fill="#0006d1"/><ellipse cx="816.00" cy="237.00" rx="6.50" ry="1.47" fill="#0005d1"/><ellipse cx="816.00" cy="237.00" rx="4.87" ry="1.10" fill="#0005d0"/><ellipse cx="816.00" cy="237.00" rx="3.25" ry="0.73" fill="#0005d0"/><ellipse cx="816.00" cy="237.00" rx="1.62" ry="0.37" fill="#0005d0"/></g>
<g fill="none" stroke="#fff" stroke-width="0.9" opacity="0.95"><ellipse cx="816.00" cy="237.00" rx="40.87" ry="9.24"/><ellipse cx="816.00" cy="237.00" rx="40.95" ry="9.26"/><ellipse cx="816.00" cy="237.00" rx="59.15" ry="13.38"/><ellipse cx="816.00" cy="237.00" rx="71.50" ry="16.17"/><ellipse cx="816.00" cy="237.00" rx="81.90" ry="18.52"/><ellipse cx="816.00" cy="237.00" rx="90.03" ry="20.36"/><ellipse cx="816.00" cy="237.00" rx="95.88" ry="21.68"/><ellipse cx="816.00" cy="237.00" rx="101.72" ry="23.01"/><ellipse cx="816.00" cy="237.00" rx="107.25" ry="24.26"/><ellipse cx="816.00" cy="237.00" rx="112.04" ry="25.34"/><ellipse cx="816.12" cy="237.05" rx="116.59" ry="26.37"/><ellipse cx="816.29" cy="237.12" rx="120.82" ry="27.32"/><ellipse cx="816.45" cy="237.19" rx="124.80" ry="28.22"/><ellipse cx="822.00" cy="239.50" rx="315.17" ry="71.28"/><ellipse cx="816.60" cy="237.25" rx="128.46" ry="29.05"/><ellipse cx="822.00" cy="239.50" rx="298.92" ry="67.60"/><ellipse cx="816.74" cy="237.31" rx="131.71" ry="29.79"/><ellipse cx="822.00" cy="239.50" rx="292.01" ry="66.04"/><ellipse cx="816.86" cy="237.36" rx="134.71" ry="30.47"/><ellipse cx="822.00" cy="239.50" rx="287.30" ry="64.97"/><ellipse cx="816.99" cy="237.41" rx="137.80" ry="31.16"/><ellipse cx="822.00" cy="239.50" rx="283.16" ry="64.04"/><ellipse cx="817.12" cy="237.47" rx="141.05" ry="31.90"/><ellipse cx="822.00" cy="239.50" rx="279.09" ry="63.12"/><ellipse cx="817.26" cy="237.53" rx="144.54" ry="32.69"/><ellipse cx="822.00" cy="239.50" rx="274.87" ry="62.16"/><ellipse cx="817.42" cy="237.59" rx="148.28" ry="33.53"/><ellipse cx="822.00" cy="239.50" rx="270.72" ry="61.23"/><ellipse cx="817.57" cy="237.66" rx="152.10" ry="34.40"/><ellipse cx="822.00" cy="239.50" rx="266.83" ry="60.34"/><ellipse cx="817.72" cy="237.72" rx="155.76" ry="35.22"/><ellipse cx="822.00" cy="239.50" rx="262.93" ry="59.46"/><ellipse cx="817.88" cy="237.78" rx="159.49" ry="36.07"/><ellipse cx="821.96" cy="239.48" rx="258.94" ry="58.56"/><ellipse cx="818.04" cy="237.85" rx="163.47" ry="36.97"/><ellipse cx="821.80" cy="239.42" rx="255.04" ry="57.68"/><ellipse cx="818.20" cy="237.92" rx="167.46" ry="37.87"/><ellipse cx="821.64" cy="239.35" rx="251.14" ry="56.80"/><ellipse cx="818.37" cy="237.99" rx="171.52" ry="38.79"/><ellipse cx="821.47" cy="239.28" rx="247.00" ry="55.86"/><ellipse cx="818.57" cy="238.07" rx="176.48" ry="39.91"/><ellipse cx="821.26" cy="239.19" rx="242.04" ry="54.74"/><ellipse cx="818.81" cy="238.17" rx="182.24" ry="41.22"/><ellipse cx="821.03" cy="239.09" rx="236.28" ry="53.43"/><ellipse cx="819.17" cy="238.32" rx="191.10" ry="43.22"/><ellipse cx="820.66" cy="238.94" rx="227.42" ry="51.43"/></g>
<defs><linearGradient id="wm1" x1="490" y1="0" x2="1150" y2="0" gradientUnits="userSpaceOnUse"><stop offset="0.17" stop-color="#fff" stop-opacity="0"/><stop offset="0.30" stop-color="#fff" stop-opacity="1"/><stop offset="0.70" stop-color="#fff" stop-opacity="1"/><stop offset="0.83" stop-color="#fff" stop-opacity="0"/></linearGradient><linearGradient id="wm2" x1="490" y1="0" x2="1150" y2="0" gradientUnits="userSpaceOnUse"><stop offset="0.30" stop-color="#fff" stop-opacity="0"/><stop offset="0.40" stop-color="#fff" stop-opacity="1"/><stop offset="0.60" stop-color="#fff" stop-opacity="1"/><stop offset="0.70" stop-color="#fff" stop-opacity="0"/></linearGradient></defs>
<path d="M519.75 239.50 a302.25 68.36 0 1 0 604.50 0 a302.25 68.36 0 1 0 -604.50 0 Z M588.49 239.03 a232.38 52.55 0 1 0 464.75 0 a232.38 52.55 0 1 0 -464.75 0 Z" fill="url(#wm1)" fill-rule="evenodd" opacity="0.42"/>
<path d="M630.57 238.28 a188.50 42.63 0 1 0 377.00 0 a188.50 42.63 0 1 0 -377.00 0 Z M699.13 237.06 a117.00 26.46 0 1 0 234.00 0 a117.00 26.46 0 1 0 -234.00 0 Z" fill="url(#wm2)" fill-rule="evenodd" opacity="0.45"/>
<ellipse cx="822" cy="239.5" rx="324.5" ry="73" fill="none" stroke="#e8fff8" stroke-width="1"/>
<path d="M515.5 150 V313 M536.5 150 V313 M556.5 150 V313 M577.5 150 V313 M598.5 150 V313 M619.5 150 V313 M639.5 150 V313 M660.5 150 V313 M681.5 150 V313 M702.5 150 V313 M723.5 150 V313 M743.5 150 V313 M764.5 150 V313 M785.5 150 V313 M806.5 150 V313 M826.5 150 V313 M847.5 150 V313 M868.5 150 V313 M889.5 150 V313 M910.5 150 V313 M930.5 150 V313 M951.5 150 V313 M972.5 150 V313 M993.5 150 V313 M1014.5 150 V313 M1034.5 150 V313 M1055.5 150 V313 M1076.5 150 V313 M1097.5 150 V313 M1117.5 150 V313 M1138.5 150 V313 M1159.5 150 V313 M1180.5 150 V313 M1201.5 150 V313 M495 290.5 H1222 M495 267.5 H1222 M495 244.5 H1222 M495 221.5 H1222 M495 198.5 H1222 M495 175.5 H1222" stroke="#dcdcdc" stroke-width="1" stroke-dasharray="1 2" fill="none"/>
<path d="M493.5 314 V148.5 H1222.5" stroke="#a8a8a8" stroke-width="2" fill="none"/>
<path d="M490.5 150 V313.5 M482.5 313.5 H490.5 M486.5 308.5 H490.5 M486.5 304.5 H490.5 M486.5 299.5 H490.5 M486.5 295.5 H490.5 M482.5 290.5 H490.5 M486.5 285.5 H490.5 M486.5 281.5 H490.5 M486.5 276.5 H490.5 M486.5 272.5 H490.5 M482.5 267.5 H490.5 M486.5 262.5 H490.5 M486.5 258.5 H490.5 M486.5 253.5 H490.5 M486.5 248.5 H490.5 M482.5 244.5 H490.5 M486.5 239.5 H490.5 M486.5 235.5 H490.5 M486.5 230.5 H490.5 M486.5 225.5 H490.5 M482.5 221.5 H490.5 M486.5 216.5 H490.5 M486.5 212.5 H490.5 M486.5 207.5 H490.5 M486.5 202.5 H490.5 M482.5 198.5 H490.5 M486.5 193.5 H490.5 M486.5 189.5 H490.5 M486.5 184.5 H490.5 M486.5 179.5 H490.5 M482.5 175.5 H490.5 M486.5 170.5 H490.5 M486.5 165.5 H490.5 M486.5 161.5 H490.5 M486.5 156.5 H490.5 M482.5 152.5 H490.5" stroke="#000" stroke-width="1" fill="none"/>
<path d="M494.5 318.5 H1222.5 M494.5 318.5 V325.5 M515.5 318.5 V322.5 M536.5 318.5 V322.5 M556.5 318.5 V322.5 M577.5 318.5 V322.5 M598.5 318.5 V325.5 M619.5 318.5 V322.5 M639.5 318.5 V322.5 M660.5 318.5 V322.5 M681.5 318.5 V322.5 M702.5 318.5 V325.5 M723.5 318.5 V322.5 M743.5 318.5 V322.5 M764.5 318.5 V322.5 M785.5 318.5 V322.5 M806.5 318.5 V325.5 M826.5 318.5 V322.5 M847.5 318.5 V322.5 M868.5 318.5 V322.5 M889.5 318.5 V322.5 M910.5 318.5 V325.5 M930.5 318.5 V322.5 M951.5 318.5 V322.5 M972.5 318.5 V322.5 M993.5 318.5 V322.5 M1014.5 318.5 V325.5 M1034.5 318.5 V322.5 M1055.5 318.5 V322.5 M1076.5 318.5 V322.5 M1097.5 318.5 V322.5 M1117.5 318.5 V325.5 M1138.5 318.5 V322.5 M1159.5 318.5 V322.5 M1180.5 318.5 V322.5 M1201.5 318.5 V322.5 M1221.5 318.5 V325.5" stroke="#000" stroke-width="1" fill="none"/>
<g font-family="Liberation Sans" font-size="12" fill="#000"><text x="477" y="316.7" text-anchor="end">0</text><text x="494.5" y="341" text-anchor="middle">0</text><text x="477" y="293.6" text-anchor="end">100</text><text x="598.4" y="341" text-anchor="middle">100</text><text x="477" y="270.6" text-anchor="end">200</text><text x="702.3" y="341" text-anchor="middle">200</text><text x="477" y="247.5" text-anchor="end">300</text><text x="806.2" y="341" text-anchor="middle">300</text><text x="477" y="224.5" text-anchor="end">400</text><text x="910.1" y="341" text-anchor="middle">400</text><text x="477" y="201.4" text-anchor="end">500</text><text x="1014.0" y="341" text-anchor="middle">500</text><text x="477" y="178.4" text-anchor="end">600</text><text x="1117.9" y="341" text-anchor="middle">600</text><text x="477" y="155.3" text-anchor="end">700</text><text x="1221.8" y="341" text-anchor="middle">700</text></g>
<text x="892" y="358" text-anchor="middle" font-family="Liberation Sans" font-size="11">bandicam 2020-02-24 11-51-44-966&#160; 0.664rms 630 X 630</text>
<rect x="1226" y="151" width="30.5" height="162" fill="url(#cbar)"/>
<path d="M1258.5 151 V313 M1258.5 151.0 H1265.5 M1258.5 155.1 H1262.5 M1258.5 159.1 H1262.5 M1258.5 163.2 H1262.5 M1258.5 167.2 H1262.5 M1258.5 171.2 H1265.5 M1258.5 175.3 H1262.5 M1258.5 179.3 H1262.5 M1258.5 183.4 H1262.5 M1258.5 187.4 H1262.5 M1258.5 191.5 H1265.5 M1258.5 195.6 H1262.5 M1258.5 199.6 H1262.5 M1258.5 203.7 H1262.5 M1258.5 207.7 H1262.5 M1258.5 211.8 H1265.5 M1258.5 215.8 H1262.5 M1258.5 219.8 H1262.5 M1258.5 223.9 H1262.5 M1258.5 227.9 H1262.5 M1258.5 232.0 H1265.5 M1258.5 236.1 H1262.5 M1258.5 240.1 H1262.5 M1258.5 244.2 H1262.5 M1258.5 248.2 H1262.5 M1258.5 252.2 H1265.5 M1258.5 256.3 H1262.5 M1258.5 260.4 H1262.5 M1258.5 264.4 H1262.5 M1258.5 268.4 H1262.5 M1258.5 272.5 H1265.5 M1258.5 276.6 H1262.5 M1258.5 280.6 H1262.5 M1258.5 284.6 H1262.5 M1258.5 288.7 H1262.5 M1258.5 292.8 H1265.5 M1258.5 296.8 H1262.5 M1258.5 300.9 H1262.5 M1258.5 304.9 H1262.5 M1258.5 308.9 H1262.5 M1258.5 313.0 H1265.5" stroke="#000" stroke-width="1" fill="none"/>
<g font-family="Liberation Sans" font-size="13" fill="#000"><text x="1270" y="155.5">2</text><text x="1270" y="175.8">1,5</text><text x="1270" y="196.0">1</text><text x="1270" y="216.2">0,5</text><text x="1270" y="236.5">0</text><text x="1270" y="256.8">-0,5</text><text x="1270" y="277.0">-1</text><text x="1270" y="297.2">-1,5</text></g>
<g font-family="Liberation Sans" font-size="19.2" fill="#000"><text transform="translate(1318.5 231) rotate(90)" text-anchor="middle">wavefront error at</text><text transform="translate(1297.5 231) rotate(90)" text-anchor="middle">550.00 nm</text></g>
</svg><svg class="a" style="left:240px;top:385px" width="1120" height="270" viewBox="240 385 1120 270">
<defs><radialGradient id="gface" cx="0.45" cy="0.4" r="0.6"><stop offset="0" stop-color="#ffffff"/><stop offset="0.85" stop-color="#fafafa"/><stop offset="1" stop-color="#e6e6e6"/></radialGradient></defs>
<rect x="354" y="455" width="980" height="143" fill="#efefef"/>
<path d="M365.5 457 V598 M376.5 457 V598 M399.5 457 V598 M410.5 457 V598 M422.5 457 V598 M444.5 457 V598 M456.5 457 V598 M467.5 457 V598 M490.5 457 V598 M501.5 457 V598 M513.5 457 V598 M536.5 457 V598 M547.5 457 V598 M558.5 457 V598 M581.5 457 V598 M592.5 457 V598 M604.5 457 V598 M627.5 457 V598 M638.5 457 V598 M649.5 457 V598 M672.5 457 V598 M684.5 457 V598 M695.5 457 V598 M718.5 457 V598 M729.5 457 V598 M741.5 457 V598 M763.5 457 V598 M775.5 457 V598 M786.5 457 V598 M809.5 457 V598 M820.5 457 V598 M832.5 457 V598 M854.5 457 V598 M866.5 457 V598 M877.5 457 V598 M900.5 457 V598 M911.5 457 V598 M923.5 457 V598 M945.5 457 V598 M957.5 457 V598 M968.5 457 V598 M991.5 457 V598 M1002.5 457 V598 M1014.5 457 V598 M1037.5 457 V598 M1048.5 457 V598 M1059.5 457 V598 M1082.5 457 V598 M1094.5 457 V598 M1105.5 457 V598 M1128.5 457 V598 M1139.5 457 V598 M1150.5 457 V598 M1173.5 457 V598 M1185.5 457 V598 M1196.5 457 V598 M1219.5 457 V598 M1230.5 457 V598 M1242.5 457 V598 M1264.5 457 V598 M1276.5 457 V598 M1287.5 457 V598 M1310.5 457 V598 M1321.5 457 V598 M1333.5 457 V598 M355 592.5 H1334 M355 587.5 H1334 M355 582.5 H1334 M355 572.5 H1334 M355 567.5 H1334 M355 562.5 H1334 M355 557.5 H1334 M355 547.5 H1334 M355 542.5 H1334 M355 537.5 H1334 M355 532.5 H1334 M355 522.5 H1334 M355 517.5 H1334 M355 512.5 H1334 M355 507.5 H1334 M355 497.5 H1334 M355 492.5 H1334 M355 487.5 H1334 M355 482.5 H1334 M355 472.5 H1334 M355 467.5 H1334 M355 462.5 H1334" stroke="#a4a4a4" stroke-width="1" stroke-dasharray="1 2" fill="none"/>
<path d="M388.5 457 V598 M433.5 457 V598 M479.5 457 V598 M524.5 457 V598 M570.5 457 V598 M615.5 457 V598 M661.5 457 V598 M706.5 457 V598 M752.5 457 V598 M797.5 457 V598 M889.5 457 V598 M934.5 457 V598 M980.5 457 V598 M1025.5 457 V598 M1071.5 457 V598 M1116.5 457 V598 M1162.5 457 V598 M1207.5 457 V598 M1253.5 457 V598 M1299.5 457 V598 M355 577.5 H1334 M355 552.5 H1334 M355 502.5 H1334 M355 477.5 H1334" stroke="#000" stroke-width="1" stroke-dasharray="1 2" fill="none"/>
<path d="M843.5 456 V598" stroke="#000" stroke-width="1" stroke-dasharray="4 2 1 2" fill="none"/>
<path d="M354 524.2 H1334 M354 530.8 H1334" stroke="#d02040" stroke-width="1" stroke-dasharray="5 2 1 2" fill="none"/>
<path d="M354 527.5 H1334" stroke="#000" stroke-width="1" fill="none"/>
<path d="M385.72 536.13 L390.32 535.06 L394.92 534.04 L399.52 533.05 L404.13 532.09 L408.73 531.13 L413.33 530.19 L417.93 529.24 L422.53 528.27 L427.13 527.28 L431.73 526.26 L436.33 525.19 L440.93 524.07 L445.53 522.88 L450.13 521.63 L454.73 520.28 L459.33 518.86 L463.94 517.35 L468.54 515.78 L473.14 514.16 L477.74 512.51 L482.34 510.82 L486.94 509.13 L491.54 507.44 L496.14 505.76 L500.74 504.10 L505.34 502.47 L509.94 500.90 L514.54 499.42 L519.15 498.04 L523.75 496.81 L528.35 495.74 L532.95 494.85 L537.55 494.18 L542.15 493.74 L546.75 493.57 L551.35 493.65 L555.95 493.97 L560.55 494.51 L565.15 495.27 L569.75 496.21 L574.35 497.33 L578.96 498.62 L583.56 500.05 L588.16 501.61 L592.76 503.28 L597.36 505.06 L601.96 506.92 L606.56 508.84 L611.16 510.81 L615.76 512.81 L620.36 514.82 L624.96 516.83 L629.56 518.83 L634.16 520.78 L638.77 522.69 L643.37 524.54 L647.97 526.34 L652.57 528.09 L657.17 529.78 L661.77 531.44 L666.37 533.23 L670.97 534.97 L675.57 536.65 L680.17 538.28 L684.77 539.86 L689.37 541.38 L693.97 542.84 L698.58 544.25 L703.18 545.60 L707.78 546.90 L712.38 548.15 L716.98 549.36 L721.58 550.52 L726.18 551.64 L730.78 552.72 L735.38 553.77 L739.98 554.78 L744.58 555.77 L749.18 556.73 L753.78 557.67 L758.39 558.59 L762.99 559.49 L767.59 560.36 L772.19 561.20 L776.79 562.01 L781.39 562.77 L785.99 563.49 L790.59 564.16 L795.19 564.78 L799.79 565.34 L804.39 565.84 L808.99 566.27 L813.59 566.63 L818.20 566.92 L822.80 567.17 L827.40 567.36 L832.00 567.52 L836.60 567.65 L841.20 567.76 L845.80 567.79 L850.40 567.73 L855.00 567.64 L859.60 567.51 L864.20 567.34 L868.80 567.09 L873.41 566.77 L878.01 566.36 L882.61 565.85 L887.21 565.25 L891.81 564.57 L896.41 563.81 L901.01 562.98 L905.61 562.11 L910.21 561.19 L914.81 560.23 L919.41 559.25 L924.01 558.26 L928.61 557.26 L933.22 556.26 L937.82 555.28 L942.42 554.32 L947.02 553.36 L951.62 552.40 L956.22 551.44 L960.82 550.44 L965.42 549.42 L970.02 548.35 L974.62 547.23 L979.22 546.05 L983.82 544.79 L988.42 543.45 L993.03 542.02 L997.63 540.50 L1002.23 538.90 L1006.83 537.23 L1011.43 535.50 L1016.03 533.70 L1020.63 531.84 L1025.23 529.93 L1029.83 528.15 L1034.43 526.36 L1039.03 524.54 L1043.63 522.68 L1048.23 520.80 L1052.84 518.90 L1057.44 516.99 L1062.04 515.09 L1066.64 513.19 L1071.24 511.32 L1075.84 509.47 L1080.44 507.67 L1085.04 505.93 L1089.64 504.24 L1094.24 502.63 L1098.84 501.10 L1103.44 499.67 L1108.04 498.38 L1112.65 497.25 L1117.25 496.29 L1121.85 495.54 L1126.45 495.01 L1131.05 494.73 L1135.65 494.73 L1140.25 495.00 L1144.85 495.52 L1149.45 496.26 L1154.05 497.21 L1158.65 498.34 L1163.25 499.63 L1167.85 501.06 L1172.46 502.60 L1177.06 504.25 L1181.66 505.96 L1186.26 507.72 L1190.86 509.50 L1195.46 511.28 L1200.06 513.06 L1204.66 514.79 L1209.26 516.48 L1213.86 518.08 L1218.46 519.59 L1223.06 520.98 L1227.67 522.24 L1232.27 523.38 L1236.87 524.42 L1241.47 525.38 L1246.07 526.26 L1250.67 527.07 L1255.27 527.84 L1259.87 528.58 L1264.47 529.29 L1269.07 530.00 L1273.67 530.72 L1278.27 531.45 L1282.87 532.22 L1287.48 533.04 L1292.08 533.92 L1296.68 534.88 L1301.28 535.93 L1301.28 549.95 L1296.68 548.86 L1292.08 547.86 L1287.48 546.94 L1282.87 546.08 L1278.27 545.27 L1273.67 544.50 L1269.07 543.74 L1264.47 542.99 L1259.87 542.23 L1255.27 541.46 L1250.67 540.65 L1246.07 539.79 L1241.47 538.87 L1236.87 537.88 L1232.27 536.80 L1227.67 535.61 L1223.06 534.31 L1218.46 532.88 L1213.86 531.33 L1209.26 529.69 L1204.66 527.97 L1200.06 526.19 L1195.46 524.37 L1190.86 522.55 L1186.26 520.73 L1181.66 518.96 L1177.06 517.25 L1172.46 515.60 L1167.85 514.06 L1163.25 512.63 L1158.65 511.34 L1154.05 510.21 L1149.45 509.26 L1144.85 508.52 L1140.25 508.00 L1135.65 507.73 L1131.05 507.73 L1126.45 508.01 L1121.85 508.54 L1117.25 509.29 L1112.65 510.25 L1108.04 511.38 L1103.44 512.67 L1098.84 514.10 L1094.24 515.63 L1089.64 517.24 L1085.04 518.93 L1080.44 520.67 L1075.84 522.47 L1071.24 524.32 L1066.64 526.19 L1062.04 528.09 L1057.44 529.99 L1052.84 531.90 L1048.23 533.80 L1043.63 535.68 L1039.03 537.54 L1034.43 539.36 L1029.83 541.15 L1025.23 542.89 L1020.63 544.39 L1016.03 545.84 L1011.43 547.24 L1006.83 548.57 L1002.23 549.85 L997.63 551.05 L993.03 552.17 L988.42 553.21 L983.82 554.17 L979.22 555.04 L974.62 555.85 L970.02 556.59 L965.42 557.29 L960.82 557.94 L956.22 558.57 L951.62 559.18 L947.02 559.77 L942.42 560.38 L937.82 560.99 L933.22 561.63 L928.61 562.28 L924.01 562.94 L919.41 563.61 L914.81 564.26 L910.21 564.89 L905.61 565.49 L901.01 566.06 L896.41 566.58 L891.81 567.04 L887.21 567.43 L882.61 567.75 L878.01 567.99 L873.41 568.13 L868.80 568.20 L864.20 568.19 L859.60 568.14 L855.00 568.05 L850.40 567.95 L845.80 567.84 L841.20 567.82 L836.60 567.87 L832.00 567.93 L827.40 567.99 L822.80 568.02 L818.20 568.03 L813.59 567.99 L808.99 567.89 L804.39 567.74 L799.79 567.52 L795.19 567.25 L790.59 566.93 L785.99 566.57 L781.39 566.16 L776.79 565.71 L772.19 565.23 L767.59 564.71 L762.99 564.17 L758.39 563.61 L753.78 563.03 L749.18 562.44 L744.58 561.83 L739.98 561.19 L735.38 560.54 L730.78 559.85 L726.18 559.14 L721.58 558.39 L716.98 557.60 L712.38 556.77 L707.78 555.90 L703.18 554.98 L698.58 554.01 L693.97 552.99 L689.37 551.92 L684.77 550.80 L680.17 549.62 L675.57 548.39 L670.97 547.12 L666.37 545.78 L661.77 544.40 L657.17 542.78 L652.57 541.09 L647.97 539.34 L643.37 537.54 L638.77 535.69 L634.16 533.78 L629.56 531.83 L624.96 529.83 L620.36 527.82 L615.76 525.81 L611.16 523.81 L606.56 521.84 L601.96 519.92 L597.36 518.06 L592.76 516.28 L588.16 514.61 L583.56 513.05 L578.96 511.62 L574.35 510.33 L569.75 509.21 L565.15 508.27 L560.55 507.51 L555.95 506.97 L551.35 506.65 L546.75 506.57 L542.15 506.74 L537.55 507.18 L532.95 507.85 L528.35 508.74 L523.75 509.81 L519.15 511.04 L514.54 512.42 L509.94 513.90 L505.34 515.47 L500.74 517.11 L496.14 518.81 L491.54 520.53 L486.94 522.26 L482.34 523.99 L477.74 525.72 L473.14 527.42 L468.54 529.07 L463.94 530.68 L459.33 532.23 L454.73 533.70 L450.13 535.08 L445.53 536.38 L440.93 537.60 L436.33 538.77 L431.73 539.87 L427.13 540.94 L422.53 541.97 L417.93 542.97 L413.33 543.97 L408.73 544.95 L404.13 545.94 L399.52 546.95 L394.92 547.98 L390.32 549.04 L385.72 550.15 Z" fill="#f3a200"/>
<path d="M385.72 538.14 L390.32 537.06 L394.92 536.03 L399.52 535.03 L404.13 534.06 L408.73 533.10 L413.33 532.14 L417.93 531.19 L422.53 530.21 L427.13 529.21 L431.73 528.18 L436.33 527.11 L440.93 525.98 L445.53 524.78 L450.13 523.52 L454.73 522.17 L459.33 520.73 L463.94 519.22 L468.54 517.64 L473.14 516.01 L477.74 514.35 L482.34 512.66 L486.94 510.96 L491.54 509.25 L496.14 507.57 L500.74 505.90 L505.34 504.27 L509.94 502.70 L514.54 501.22 L519.15 499.84 L523.75 498.61 L528.35 497.54 L532.95 496.65 L537.55 495.98 L542.15 495.54 L546.75 495.37 L551.35 495.45 L555.95 495.77 L560.55 496.31 L565.15 497.07 L569.75 498.01 L574.35 499.13 L578.96 500.42 L583.56 501.85 L588.16 503.41 L592.76 505.08 L597.36 506.86 L601.96 508.72 L606.56 510.64 L611.16 512.61 L615.76 514.61 L620.36 516.62 L624.96 518.63 L629.56 520.63 L634.16 522.58 L638.77 524.49 L643.37 526.34 L647.97 528.14 L652.57 529.89 L657.17 531.58 L661.77 533.23 L666.37 534.94 L670.97 536.60 L675.57 538.20 L680.17 539.75 L684.77 541.24 L689.37 542.68 L693.97 544.07 L698.58 545.40 L703.18 546.68 L707.78 547.90 L712.38 549.08 L716.98 550.21 L721.58 551.29 L726.18 552.34 L730.78 553.35 L735.38 554.32 L739.98 555.26 L744.58 556.18 L749.18 557.07 L753.78 557.94 L758.39 558.80 L762.99 559.63 L767.59 560.43 L772.19 561.21 L776.79 561.95 L781.39 562.65 L785.99 563.31 L790.59 563.92 L795.19 564.48 L799.79 564.98 L804.39 565.42 L808.99 565.79 L813.59 566.10 L818.20 566.35 L822.80 566.54 L827.40 566.69 L832.00 566.81 L836.60 566.90 L841.20 566.97 L845.80 567.00 L850.40 566.97 L855.00 566.92 L859.60 566.84 L864.20 566.71 L868.80 566.51 L873.41 566.25 L878.01 565.89 L882.61 565.43 L887.21 564.89 L891.81 564.26 L896.41 563.56 L901.01 562.80 L905.61 561.99 L910.21 561.13 L914.81 560.24 L919.41 559.33 L924.01 558.40 L928.61 557.46 L933.22 556.54 L937.82 555.62 L942.42 554.73 L947.02 553.84 L951.62 552.96 L956.22 552.06 L960.82 551.14 L965.42 550.19 L970.02 549.20 L974.62 548.16 L979.22 547.05 L983.82 545.87 L988.42 544.60 L993.03 543.25 L997.63 541.81 L1002.23 540.29 L1006.83 538.70 L1011.43 537.04 L1016.03 535.32 L1020.63 533.55 L1025.23 531.72 L1029.83 529.95 L1034.43 528.16 L1039.03 526.34 L1043.63 524.48 L1048.23 522.60 L1052.84 520.70 L1057.44 518.79 L1062.04 516.89 L1066.64 514.99 L1071.24 513.12 L1075.84 511.27 L1080.44 509.47 L1085.04 507.73 L1089.64 506.04 L1094.24 504.43 L1098.84 502.90 L1103.44 501.47 L1108.04 500.18 L1112.65 499.05 L1117.25 498.09 L1121.85 497.34 L1126.45 496.81 L1131.05 496.53 L1135.65 496.53 L1140.25 496.80 L1144.85 497.32 L1149.45 498.06 L1154.05 499.01 L1158.65 500.14 L1163.25 501.43 L1167.85 502.86 L1172.46 504.40 L1177.06 506.05 L1181.66 507.76 L1186.26 509.52 L1190.86 511.31 L1195.46 513.10 L1200.06 514.88 L1204.66 516.63 L1209.26 518.32 L1213.86 519.93 L1218.46 521.45 L1223.06 522.84 L1227.67 524.11 L1232.27 525.27 L1236.87 526.32 L1241.47 527.28 L1246.07 528.16 L1250.67 528.99 L1255.27 529.77 L1259.87 530.51 L1264.47 531.23 L1269.07 531.95 L1273.67 532.67 L1278.27 533.42 L1282.87 534.20 L1287.48 535.02 L1292.08 535.91 L1296.68 536.88 L1301.28 537.93 L1301.28 546.34 L1296.68 545.26 L1292.08 544.28 L1287.48 543.36 L1282.87 542.51 L1278.27 541.71 L1273.67 540.94 L1269.07 540.19 L1264.47 539.45 L1259.87 538.70 L1255.27 537.94 L1250.67 537.13 L1246.07 536.28 L1241.47 535.37 L1236.87 534.39 L1232.27 533.31 L1227.67 532.14 L1223.06 530.84 L1218.46 529.42 L1213.86 527.88 L1209.26 526.25 L1204.66 524.53 L1200.06 522.76 L1195.46 520.96 L1190.86 519.14 L1186.26 517.33 L1181.66 515.56 L1177.06 513.85 L1172.46 512.20 L1167.85 510.66 L1163.25 509.23 L1158.65 507.94 L1154.05 506.81 L1149.45 505.86 L1144.85 505.12 L1140.25 504.60 L1135.65 504.33 L1131.05 504.33 L1126.45 504.61 L1121.85 505.14 L1117.25 505.89 L1112.65 506.85 L1108.04 507.98 L1103.44 509.27 L1098.84 510.70 L1094.24 512.23 L1089.64 513.84 L1085.04 515.53 L1080.44 517.27 L1075.84 519.07 L1071.24 520.92 L1066.64 522.79 L1062.04 524.69 L1057.44 526.59 L1052.84 528.50 L1048.23 530.40 L1043.63 532.28 L1039.03 534.14 L1034.43 535.96 L1029.83 537.75 L1025.23 539.49 L1020.63 541.08 L1016.03 542.61 L1011.43 544.09 L1006.83 545.51 L1002.23 546.86 L997.63 548.14 L993.03 549.34 L988.42 550.46 L983.82 551.49 L979.22 552.45 L974.62 553.33 L970.02 554.15 L965.42 554.91 L960.82 555.64 L956.22 556.34 L951.62 557.02 L947.02 557.69 L942.42 558.36 L937.82 559.05 L933.22 559.75 L928.61 560.48 L924.01 561.21 L919.41 561.94 L914.81 562.65 L910.21 563.35 L905.61 564.02 L901.01 564.64 L896.41 565.22 L891.81 565.74 L887.21 566.20 L882.61 566.57 L878.01 566.86 L873.41 567.06 L868.80 567.18 L864.20 567.22 L859.60 567.22 L855.00 567.17 L850.40 567.10 L845.80 567.03 L841.20 567.00 L836.60 567.03 L832.00 567.05 L827.40 567.06 L822.80 567.05 L818.20 567.01 L813.59 566.92 L808.99 566.77 L804.39 566.56 L799.79 566.29 L795.19 565.96 L790.59 565.58 L785.99 565.15 L781.39 564.68 L776.79 564.17 L772.19 563.62 L767.59 563.04 L762.99 562.44 L758.39 561.81 L753.78 561.16 L749.18 560.50 L744.58 559.82 L739.98 559.11 L735.38 558.38 L730.78 557.63 L726.18 556.84 L721.58 556.01 L716.98 555.15 L712.38 554.25 L707.78 553.30 L703.18 552.31 L698.58 551.26 L693.97 550.16 L689.37 549.01 L684.77 547.81 L680.17 546.55 L675.57 545.25 L670.97 543.89 L666.37 542.47 L661.77 541.01 L657.17 539.38 L652.57 537.69 L647.97 535.94 L643.37 534.14 L638.77 532.29 L634.16 530.38 L629.56 528.43 L624.96 526.43 L620.36 524.42 L615.76 522.41 L611.16 520.41 L606.56 518.44 L601.96 516.52 L597.36 514.66 L592.76 512.88 L588.16 511.21 L583.56 509.65 L578.96 508.22 L574.35 506.93 L569.75 505.81 L565.15 504.87 L560.55 504.11 L555.95 503.57 L551.35 503.25 L546.75 503.17 L542.15 503.34 L537.55 503.78 L532.95 504.45 L528.35 505.34 L523.75 506.41 L519.15 507.64 L514.54 509.02 L509.94 510.50 L505.34 512.07 L500.74 513.71 L496.14 515.40 L491.54 517.11 L486.94 518.83 L482.34 520.56 L477.74 522.28 L473.14 523.96 L468.54 525.62 L463.94 527.22 L459.33 528.75 L454.73 530.22 L450.13 531.59 L445.53 532.88 L440.93 534.10 L436.33 535.25 L431.73 536.35 L427.13 537.41 L422.53 538.43 L417.93 539.43 L413.33 540.41 L408.73 541.39 L404.13 542.37 L399.52 543.37 L394.92 544.39 L390.32 545.45 L385.72 546.55 Z" fill="#f8b418" opacity="0.7"/>
<path d="M385.7 543.1 L390.3 542.1 L394.9 541.0 L399.5 540.0 L404.1 539.0 L408.7 538.0 L413.3 537.1 L417.9 536.1 L422.5 535.1 L427.1 534.1 L431.7 533.1 L436.3 532.0 L440.9 530.8 L445.5 529.6 L450.1 528.4 L454.7 527.0 L459.3 525.5 L463.9 524.0 L468.5 522.4 L473.1 520.8 L477.7 519.1 L482.3 517.4 L486.9 515.7 L491.5 514.0 L496.1 512.3 L500.7 510.6 L505.3 509.0 L509.9 507.4 L514.5 505.9 L519.1 504.5 L523.7 503.3 L528.3 502.2 L532.9 501.4 L537.5 500.7 L542.1 500.2 L546.7 500.1 L551.4 500.2 L556.0 500.5 L560.6 501.0 L565.2 501.8 L569.8 502.7 L574.4 503.8 L579.0 505.1 L583.6 506.5 L588.2 508.1 L592.8 509.8 L597.4 511.6 L602.0 513.4 L606.6 515.3 L611.2 517.3 L615.8 519.3 L620.4 521.3 L625.0 523.3 L629.6 525.3 L634.2 527.3 L638.8 529.2 L643.4 531.0 L648.0 532.8 L652.6 534.6 L657.2 536.3 L661.8 537.9 L666.4 539.5 L671.0 541.0 L675.6 542.5 L680.2 544.0 L684.8 545.3 L689.4 546.6 L694.0 547.9 L698.6 549.1 L703.2 550.3 L707.8 551.4 L712.4 552.5 L717.0 553.5 L721.6 554.5 L726.2 555.4 L730.8 556.3 L735.4 557.2 L740.0 558.0 L744.6 558.8 L749.2 559.6 L753.8 560.4 L758.4 561.1 L763.0 561.8 L767.6 562.5 L772.2 563.2 L776.8 563.9 L781.4 564.5 L786.0 565.0 L790.6 565.5 L795.2 566.0 L799.8 566.4 L804.4 566.8 L809.0 567.1 L813.6 567.3 L818.2 567.5 L822.8 567.6 L827.4 567.7 L832.0 567.7 L836.6 567.8 L841.2 567.8 L845.8 567.8 L850.4 567.8 L855.0 567.8 L859.6 567.8 L864.2 567.8 L868.8 567.6 L873.4 567.5 L878.0 567.2 L882.6 566.8 L887.2 566.3 L891.8 565.8 L896.4 565.2 L901.0 564.5 L905.6 563.8 L910.2 563.0 L914.8 562.2 L919.4 561.4 L924.0 560.6 L928.6 559.8 L933.2 558.9 L937.8 558.1 L942.4 557.3 L947.0 556.6 L951.6 555.8 L956.2 555.0 L960.8 554.2 L965.4 553.4 L970.0 552.5 L974.6 551.5 L979.2 550.5 L983.8 549.5 L988.4 548.3 L993.0 547.1 L997.6 545.8 L1002.2 544.4 L1006.8 542.9 L1011.4 541.4 L1016.0 539.8 L1020.6 538.1 L1025.2 536.4 L1029.8 534.7 L1034.4 532.9 L1039.0 531.0 L1043.6 529.2 L1048.2 527.3 L1052.8 525.4 L1057.4 523.5 L1062.0 521.6 L1066.6 519.7 L1071.2 517.8 L1075.8 516.0 L1080.4 514.2 L1085.0 512.4 L1089.6 510.7 L1094.2 509.1 L1098.8 507.6 L1103.4 506.2 L1108.0 504.9 L1112.6 503.7 L1117.2 502.8 L1121.8 502.0 L1126.4 501.5 L1131.0 501.2 L1135.6 501.2 L1140.3 501.5 L1144.9 502.0 L1149.5 502.8 L1154.1 503.7 L1158.7 504.8 L1163.3 506.1 L1167.9 507.6 L1172.5 509.1 L1177.1 510.7 L1181.7 512.5 L1186.3 514.2 L1190.9 516.0 L1195.5 517.8 L1200.1 519.6 L1204.7 521.4 L1209.3 523.1 L1213.9 524.7 L1218.5 526.2 L1223.1 527.6 L1227.7 528.9 L1232.3 530.1 L1236.9 531.2 L1241.5 532.1 L1246.1 533.0 L1250.7 533.9 L1255.3 534.7 L1259.9 535.4 L1264.5 536.1 L1269.1 536.9 L1273.7 537.6 L1278.3 538.4 L1282.9 539.2 L1287.5 540.0 L1292.1 540.9 L1296.7 541.9 L1301.3 542.9" stroke="#1a1a1a" stroke-width="1" fill="none"/>
<path d="M385.7 547.1 L390.3 546.0 L394.9 544.9 L399.5 543.9 L404.1 542.9 L408.7 541.9 L413.3 540.9 L417.9 540.0 L422.5 539.0 L427.1 537.9 L431.7 536.9 L436.3 535.8 L440.9 534.6 L445.5 533.4 L450.1 532.1 L454.7 530.7 L459.3 529.3 L463.9 527.8 L468.5 526.2 L473.1 524.5 L477.7 522.8 L482.3 521.1 L486.9 519.4 L491.5 517.6 L496.1 515.9 L500.7 514.2 L505.3 512.6 L509.9 511.0 L514.5 509.6 L519.1 508.2 L523.7 506.9 L528.3 505.9 L532.9 505.0 L537.5 504.3 L542.1 503.9 L546.7 503.7 L551.4 503.8 L556.0 504.1 L560.6 504.7 L565.2 505.4 L569.8 506.4 L574.4 507.5 L579.0 508.8 L583.6 510.2 L588.2 511.7 L592.8 513.4 L597.4 515.2 L602.0 517.1 L606.6 519.0 L611.2 520.9 L615.8 522.9 L620.4 525.0 L625.0 527.0 L629.6 529.0 L634.2 530.9 L638.8 532.8 L643.4 534.7 L648.0 536.5 L652.6 538.2 L657.2 539.9 L661.8 541.5 L666.4 543.0 L671.0 544.4 L675.6 545.8 L680.2 547.1 L684.8 548.4 L689.4 549.6 L694.0 550.8 L698.6 551.9 L703.2 552.9 L707.8 553.9 L712.4 554.9 L717.0 555.8 L721.6 556.7 L726.2 557.5 L730.8 558.3 L735.4 559.0 L740.0 559.8 L744.6 560.5 L749.2 561.2 L753.8 561.9 L758.4 562.5 L763.0 563.1 L767.6 563.8 L772.2 564.3 L776.8 564.9 L781.4 565.4 L786.0 565.9 L790.6 566.3 L795.2 566.7 L799.8 567.0 L804.4 567.3 L809.0 567.5 L813.6 567.7 L818.2 567.8 L822.8 567.8 L827.4 567.9 L832.0 567.8 L836.6 567.8 L841.2 567.8 L845.8 567.8 L850.4 567.9 L855.0 568.0 L859.6 568.0 L864.2 568.0 L868.8 568.0 L873.4 567.8 L878.0 567.6 L882.6 567.3 L887.2 567.0 L891.8 566.5 L896.4 566.0 L901.0 565.4 L905.6 564.7 L910.2 564.1 L914.8 563.4 L919.4 562.6 L924.0 561.9 L928.6 561.2 L933.2 560.4 L937.8 559.7 L942.4 559.0 L947.0 558.4 L951.6 557.7 L956.2 557.0 L960.8 556.3 L965.4 555.6 L970.0 554.8 L974.6 554.0 L979.2 553.1 L983.8 552.1 L988.4 551.1 L993.0 549.9 L997.6 548.7 L1002.2 547.4 L1006.8 546.1 L1011.4 544.7 L1016.0 543.2 L1020.6 541.6 L1025.2 540.0 L1029.8 538.3 L1034.4 536.5 L1039.0 534.7 L1043.6 532.8 L1048.2 530.9 L1052.8 529.0 L1057.4 527.1 L1062.0 525.2 L1066.6 523.3 L1071.2 521.5 L1075.8 519.6 L1080.4 517.8 L1085.0 516.1 L1089.6 514.4 L1094.2 512.8 L1098.8 511.2 L1103.4 509.8 L1108.0 508.5 L1112.6 507.4 L1117.2 506.4 L1121.8 505.7 L1126.4 505.1 L1131.0 504.9 L1135.6 504.9 L1140.3 505.1 L1144.9 505.7 L1149.5 506.4 L1154.1 507.3 L1158.7 508.5 L1163.3 509.8 L1167.9 511.2 L1172.5 512.7 L1177.1 514.4 L1181.7 516.1 L1186.3 517.9 L1190.9 519.7 L1195.5 521.5 L1200.1 523.3 L1204.7 525.1 L1209.3 526.8 L1213.9 528.4 L1218.5 530.0 L1223.1 531.4 L1227.7 532.7 L1232.3 533.8 L1236.9 534.9 L1241.5 535.9 L1246.1 536.8 L1250.7 537.7 L1255.3 538.5 L1259.9 539.2 L1264.5 540.0 L1269.1 540.7 L1273.7 541.5 L1278.3 542.2 L1282.9 543.0 L1287.5 543.9 L1292.1 544.8 L1296.7 545.8 L1301.3 546.9" stroke="#333" stroke-width="0.7" stroke-dasharray="3 2" fill="none" opacity="0.75"/>
<path d="M385.7 539.6 L390.3 538.6 L394.9 537.5 L399.5 536.5 L404.1 535.5 L408.7 534.6 L413.3 533.6 L417.9 532.7 L422.5 531.7 L427.1 530.7 L431.7 529.7 L436.3 528.6 L440.9 527.5 L445.5 526.3 L450.1 525.0 L454.7 523.6 L459.3 522.2 L463.9 520.7 L468.5 519.1 L473.1 517.5 L477.7 515.8 L482.3 514.1 L486.9 512.4 L491.5 510.7 L496.1 509.0 L500.7 507.4 L505.3 505.7 L509.9 504.2 L514.5 502.7 L519.1 501.3 L523.7 500.1 L528.3 499.0 L532.9 498.1 L537.5 497.4 L542.1 497.0 L546.7 496.8 L551.4 496.9 L556.0 497.2 L560.6 497.8 L565.2 498.5 L569.8 499.5 L574.4 500.6 L579.0 501.9 L583.6 503.3 L588.2 504.9 L592.8 506.5 L597.4 508.3 L602.0 510.2 L606.6 512.1 L611.2 514.1 L615.8 516.1 L620.4 518.1 L625.0 520.1 L629.6 522.1 L634.2 524.0 L638.8 525.9 L643.4 527.8 L648.0 529.6 L652.6 531.3 L657.2 533.0 L661.8 534.7 L666.4 536.4 L671.0 538.0 L675.6 539.6 L680.2 541.1 L684.8 542.6 L689.4 544.0 L694.0 545.4 L698.6 546.7 L703.2 547.9 L707.8 549.2 L712.4 550.3 L717.0 551.4 L721.6 552.5 L726.2 553.5 L730.8 554.5 L735.4 555.5 L740.0 556.4 L744.6 557.3 L749.2 558.2 L753.8 559.0 L758.4 559.8 L763.0 560.7 L767.6 561.4 L772.2 562.2 L776.8 562.9 L781.4 563.6 L786.0 564.3 L790.6 564.9 L795.2 565.4 L799.8 565.9 L804.4 566.3 L809.0 566.7 L813.6 567.0 L818.2 567.2 L822.8 567.4 L827.4 567.5 L832.0 567.6 L836.6 567.7 L841.2 567.8 L845.8 567.8 L850.4 567.8 L855.0 567.7 L859.6 567.7 L864.2 567.6 L868.8 567.4 L873.4 567.1 L878.0 566.8 L882.6 566.3 L887.2 565.8 L891.8 565.2 L896.4 564.5 L901.0 563.8 L905.6 563.0 L910.2 562.1 L914.8 561.2 L919.4 560.3 L924.0 559.4 L928.6 558.5 L933.2 557.6 L937.8 556.7 L942.4 555.8 L947.0 555.0 L951.6 554.1 L956.2 553.2 L960.8 552.3 L965.4 551.4 L970.0 550.4 L974.6 549.4 L979.2 548.3 L983.8 547.1 L988.4 545.9 L993.0 544.6 L997.6 543.1 L1002.2 541.6 L1006.8 540.1 L1011.4 538.4 L1016.0 536.7 L1020.6 535.0 L1025.2 533.2 L1029.8 531.4 L1034.4 529.6 L1039.0 527.8 L1043.6 525.9 L1048.2 524.0 L1052.8 522.2 L1057.4 520.2 L1062.0 518.3 L1066.6 516.4 L1071.2 514.6 L1075.8 512.7 L1080.4 510.9 L1085.0 509.2 L1089.6 507.5 L1094.2 505.9 L1098.8 504.3 L1103.4 502.9 L1108.0 501.6 L1112.6 500.5 L1117.2 499.5 L1121.8 498.8 L1126.4 498.3 L1131.0 498.0 L1135.6 498.0 L1140.3 498.2 L1144.9 498.8 L1149.5 499.5 L1154.1 500.5 L1158.7 501.6 L1163.3 502.9 L1167.9 504.3 L1172.5 505.9 L1177.1 507.5 L1181.7 509.2 L1186.3 511.0 L1190.9 512.8 L1195.5 514.6 L1200.1 516.3 L1204.7 518.1 L1209.3 519.8 L1213.9 521.4 L1218.5 522.9 L1223.1 524.3 L1227.7 525.6 L1232.3 526.7 L1236.9 527.8 L1241.5 528.8 L1246.1 529.6 L1250.7 530.5 L1255.3 531.2 L1259.9 532.0 L1264.5 532.7 L1269.1 533.4 L1273.7 534.2 L1278.3 534.9 L1282.9 535.7 L1287.5 536.5 L1292.1 537.4 L1296.7 538.4 L1301.3 539.4" stroke="#333" stroke-width="0.7" stroke-dasharray="3 2" fill="none" opacity="0.75"/>
<path d="M800 567.2 Q843 568.8 870 567.5" stroke="#111" stroke-width="1.8" fill="none"/>
<g fill="#222"><rect x="384" y="538" width="6" height="9"/><rect x="538" y="497" width="10" height="6"/><rect x="1128" y="498" width="10" height="6"/><rect x="1296" y="538" width="8" height="9"/></g>
<g font-family="Liberation Sans" font-size="11" fill="#dc2440"><text x="1217" y="520">1/8 wave on wavefront</text><text x="1217" y="525.5">1/8 wave on wavefront</text></g>
<path d="M354 598 V455 H1334"  stroke="#a0a0a0" stroke-width="2" fill="none"/>
<path d="M350.5 456 V598 M346.5 592.5 H350.5 M346.5 587.5 H350.5 M346.5 582.5 H350.5 M342.5 577.5 H350.5 M346.5 572.5 H350.5 M346.5 567.5 H350.5 M346.5 562.5 H350.5 M346.5 557.5 H350.5 M342.5 552.5 H350.5 M346.5 547.5 H350.5 M346.5 542.5 H350.5 M346.5 537.5 H350.5 M346.5 532.5 H350.5 M342.5 527.5 H350.5 M346.5 522.5 H350.5 M346.5 517.5 H350.5 M346.5 512.5 H350.5 M346.5 507.5 H350.5 M342.5 502.5 H350.5 M346.5 497.5 H350.5 M346.5 492.5 H350.5 M346.5 487.5 H350.5 M346.5 482.5 H350.5 M342.5 477.5 H350.5 M346.5 472.5 H350.5 M346.5 467.5 H350.5 M346.5 462.5 H350.5 M346.5 457.5 H350.5" stroke="#000" stroke-width="1" fill="none"/>
<path d="M359.5 602.5 H1334 M365.5 602.5 V607.5 M376.5 602.5 V605.5 M388.5 602.5 V610.5 M399.5 602.5 V605.5 M410.5 602.5 V607.5 M422.5 602.5 V605.5 M433.5 602.5 V610.5 M444.5 602.5 V605.5 M456.5 602.5 V607.5 M467.5 602.5 V605.5 M479.5 602.5 V610.5 M490.5 602.5 V605.5 M501.5 602.5 V607.5 M513.5 602.5 V605.5 M524.5 602.5 V610.5 M536.5 602.5 V605.5 M547.5 602.5 V607.5 M558.5 602.5 V605.5 M570.5 602.5 V610.5 M581.5 602.5 V605.5 M592.5 602.5 V607.5 M604.5 602.5 V605.5 M615.5 602.5 V610.5 M627.5 602.5 V605.5 M638.5 602.5 V607.5 M649.5 602.5 V605.5 M661.5 602.5 V610.5 M672.5 602.5 V605.5 M684.5 602.5 V607.5 M695.5 602.5 V605.5 M706.5 602.5 V610.5 M718.5 602.5 V605.5 M729.5 602.5 V607.5 M741.5 602.5 V605.5 M752.5 602.5 V610.5 M763.5 602.5 V605.5 M775.5 602.5 V607.5 M786.5 602.5 V605.5 M797.5 602.5 V610.5 M809.5 602.5 V605.5 M820.5 602.5 V607.5 M832.5 602.5 V605.5 M843.5 602.5 V610.5 M854.5 602.5 V605.5 M866.5 602.5 V607.5 M877.5 602.5 V605.5 M889.5 602.5 V610.5 M900.5 602.5 V605.5 M911.5 602.5 V607.5 M923.5 602.5 V605.5 M934.5 602.5 V610.5 M945.5 602.5 V605.5 M957.5 602.5 V607.5 M968.5 602.5 V605.5 M980.5 602.5 V610.5 M991.5 602.5 V605.5 M1002.5 602.5 V607.5 M1014.5 602.5 V605.5 M1025.5 602.5 V610.5 M1037.5 602.5 V605.5 M1048.5 602.5 V607.5 M1059.5 602.5 V605.5 M1071.5 602.5 V610.5 M1082.5 602.5 V605.5 M1094.5 602.5 V607.5 M1105.5 602.5 V605.5 M1116.5 602.5 V610.5 M1128.5 602.5 V605.5 M1139.5 602.5 V607.5 M1150.5 602.5 V605.5 M1162.5 602.5 V610.5 M1173.5 602.5 V605.5 M1185.5 602.5 V607.5 M1196.5 602.5 V605.5 M1207.5 602.5 V610.5 M1219.5 602.5 V605.5 M1230.5 602.5 V607.5 M1242.5 602.5 V605.5 M1253.5 602.5 V610.5 M1264.5 602.5 V605.5 M1276.5 602.5 V607.5 M1287.5 602.5 V605.5 M1299.5 602.5 V610.5 M1310.5 602.5 V605.5 M1321.5 602.5 V607.5" stroke="#000" stroke-width="1" fill="none"/>
<g font-family="Liberation Sans" font-size="13" fill="#000"><text x="337" y="482.2" text-anchor="end">1 000</text><text x="337" y="507.2" text-anchor="end">500</text><text x="337" y="532.2" text-anchor="end">0</text><text x="337" y="557.2" text-anchor="end">-500</text><text x="337" y="582.2" text-anchor="end">-1 000</text><text x="388.0" y="624.8" text-anchor="middle">-200</text><text x="433.6" y="624.8" text-anchor="middle">-180</text><text x="479.1" y="624.8" text-anchor="middle">-160</text><text x="524.7" y="624.8" text-anchor="middle">-140</text><text x="570.2" y="624.8" text-anchor="middle">-120</text><text x="615.8" y="624.8" text-anchor="middle">-100</text><text x="661.3" y="624.8" text-anchor="middle">-80</text><text x="706.9" y="624.8" text-anchor="middle">-60</text><text x="752.4" y="624.8" text-anchor="middle">-40</text><text x="798.0" y="624.8" text-anchor="middle">-20</text><text x="843.5" y="624.8" text-anchor="middle">0</text><text x="889.0" y="624.8" text-anchor="middle">20</text><text x="934.6" y="624.8" text-anchor="middle">40</text><text x="980.1" y="624.8" text-anchor="middle">60</text><text x="1025.7" y="624.8" text-anchor="middle">80</text><text x="1071.2" y="624.8" text-anchor="middle">100</text><text x="1116.8" y="624.8" text-anchor="middle">120</text><text x="1162.3" y="624.8" text-anchor="middle">140</text><text x="1207.9" y="624.8" text-anchor="middle">160</text><text x="1253.5" y="624.8" text-anchor="middle">180</text><text x="1299.0" y="624.8" text-anchor="middle">200</text></g>
<text x="841.5" y="644" text-anchor="middle" font-family="Liberation Sans" font-size="17.9">Radius mm</text>
<g font-family="Liberation Sans" font-size="18.3" fill="#000"><text transform="translate(277 527) rotate(-90)" text-anchor="middle">Error in</text><text transform="translate(295 527) rotate(-90)" text-anchor="middle">nanometers</text></g>
<text x="722" y="446" font-family="Liberation Sans" font-size="19" font-weight="700" letter-spacing="0.6">Profile of wavefront error</text>
<circle cx="357" cy="432.7" r="34.5" fill="#e4e4e4" opacity="0.6"/>
<circle cx="356" cy="431.7" r="32.5" fill="url(#gface)" stroke="#cfcfcf" stroke-width="4"/>
<path d="M356.00 408.20 L356.00 402.20 M359.83 407.50 L360.54 403.06 M363.57 408.40 L364.96 404.12 M367.12 409.87 L369.17 405.86 M370.40 411.88 L373.05 408.24 M372.62 415.08 L376.86 410.84 M375.82 417.30 L379.46 414.65 M377.83 420.58 L381.84 418.53 M379.30 424.13 L383.58 422.74 M380.20 427.87 L384.64 427.16 M379.50 431.70 L385.50 431.70 M380.20 435.53 L384.64 436.24 M379.30 439.27 L383.58 440.66 M377.83 442.82 L381.84 444.87 M375.82 446.10 L379.46 448.75 M372.62 448.32 L376.86 452.56 M370.40 451.52 L373.05 455.16 M367.12 453.53 L369.17 457.54 M363.57 455.00 L364.96 459.28 M359.83 455.90 L360.54 460.34 M356.00 455.20 L356.00 461.20 M352.17 455.90 L351.46 460.34 M348.43 455.00 L347.04 459.28 M344.88 453.53 L342.83 457.54 M341.60 451.52 L338.95 455.16 M339.38 448.32 L335.14 452.56 M336.18 446.10 L332.54 448.75 M334.17 442.82 L330.16 444.87 M332.70 439.27 L328.42 440.66 M331.80 435.53 L327.36 436.24 M332.50 431.70 L326.50 431.70 M331.80 427.87 L327.36 427.16 M332.70 424.13 L328.42 422.74 M334.17 420.58 L330.16 418.53 M336.18 417.30 L332.54 414.65 M339.38 415.08 L335.14 410.84 M341.60 411.88 L338.95 408.24 M344.88 409.87 L342.83 405.86 M348.43 408.40 L347.04 404.12 M352.17 407.50 L351.46 403.06" stroke="#444" stroke-width="1.3" fill="none"/>
<path d="M354 431.5 L332 425 L337 431.5 Z" fill="#e81010"/><path d="M354 431.5 L337 431.5 L333 438 Z" fill="#999"/>
</svg><!-- profile controls -->
<div class="t" style="left:384px;top:406px;font-size:11px"><span style="color:#666">ı</span>&nbsp;Slope:</div>
<div class="a" style="left:434px;top:401px;width:191px;height:20px;border:1px solid #cfcfcf;background:#fff"></div>
<div class="t" style="left:441px;top:406px;font-size:11px">&gt; 1,00 arcseconds on wavefront</div>
<svg class="a" style="left:609px;top:403px" width="15" height="16"><rect x="0.5" y="0.5" width="14" height="15" fill="#eef2fa" stroke="#c8d0e0"/><path d="M4 6.5 L7.5 3.5 L11 6.5 Z M4 9.5 L7.5 12.5 L11 9.5 Z" fill="#4a5a80"/></svg>
<div class="cb on" style="left:632px;top:404px"></div>
<div class="t" style="left:650px;top:406px;font-size:10.6px">Show in Nanometers</div>
<div class="cb" style="left:759px;top:404px"></div>
<div class="t" style="left:776px;top:406px;font-size:11px">Surface error</div>
<div class="rad" style="left:852px;top:404px"></div>
<div class="t" style="left:871px;top:406px;font-size:11px">one diameter of current wavefront</div>
<div class="rad" style="left:1048px;top:404px"></div>
<div class="a" style="left:1051px;top:407px;width:7px;height:7px;border-radius:50%;background:radial-gradient(circle at 40% 35%,#7ab4e0,#1a4a80)"></div>
<div class="t" style="left:1067px;top:406px;font-size:11px">16 diameters of current wavefront</div>
<div class="rad" style="left:1242px;top:404px"></div>
<div class="t" style="left:1262px;top:406px;font-size:11px">All wavefronts</div>
<!-- status bar -->
<div class="t" style="left:3px;top:687px;font-size:11.4px">Outside: x= 335.0 y= 335.0, Radius=&nbsp; 315.0</div>
<div class="a" style="left:228px;top:680px;width:1px;height:24px;background:#d0d0d0"></div>
<div class="t" style="left:233px;top:687px;font-size:11.4px;letter-spacing:0.2px">margin 20 316</div>
<div class="a" style="left:307px;top:680px;width:1px;height:24px;background:#d0d0d0"></div>
<div class="t" style="left:331px;top:687px;font-size:11.4px;letter-spacing:0.45px">refining outside outline position.</div>
<div class="a" style="left:1027px;top:681px;width:1px;height:24px;background:#dadada"></div>
<div class="a" style="left:1016px;top:682px;width:315px;height:22px;border:1px solid #8c8c8c;border-radius:3px;background:linear-gradient(#ececec,#dcdcdc 30%,#c8c8c8 32%,#c4c4c4 80%,#d4d4d4)"></div>
</body></html>
